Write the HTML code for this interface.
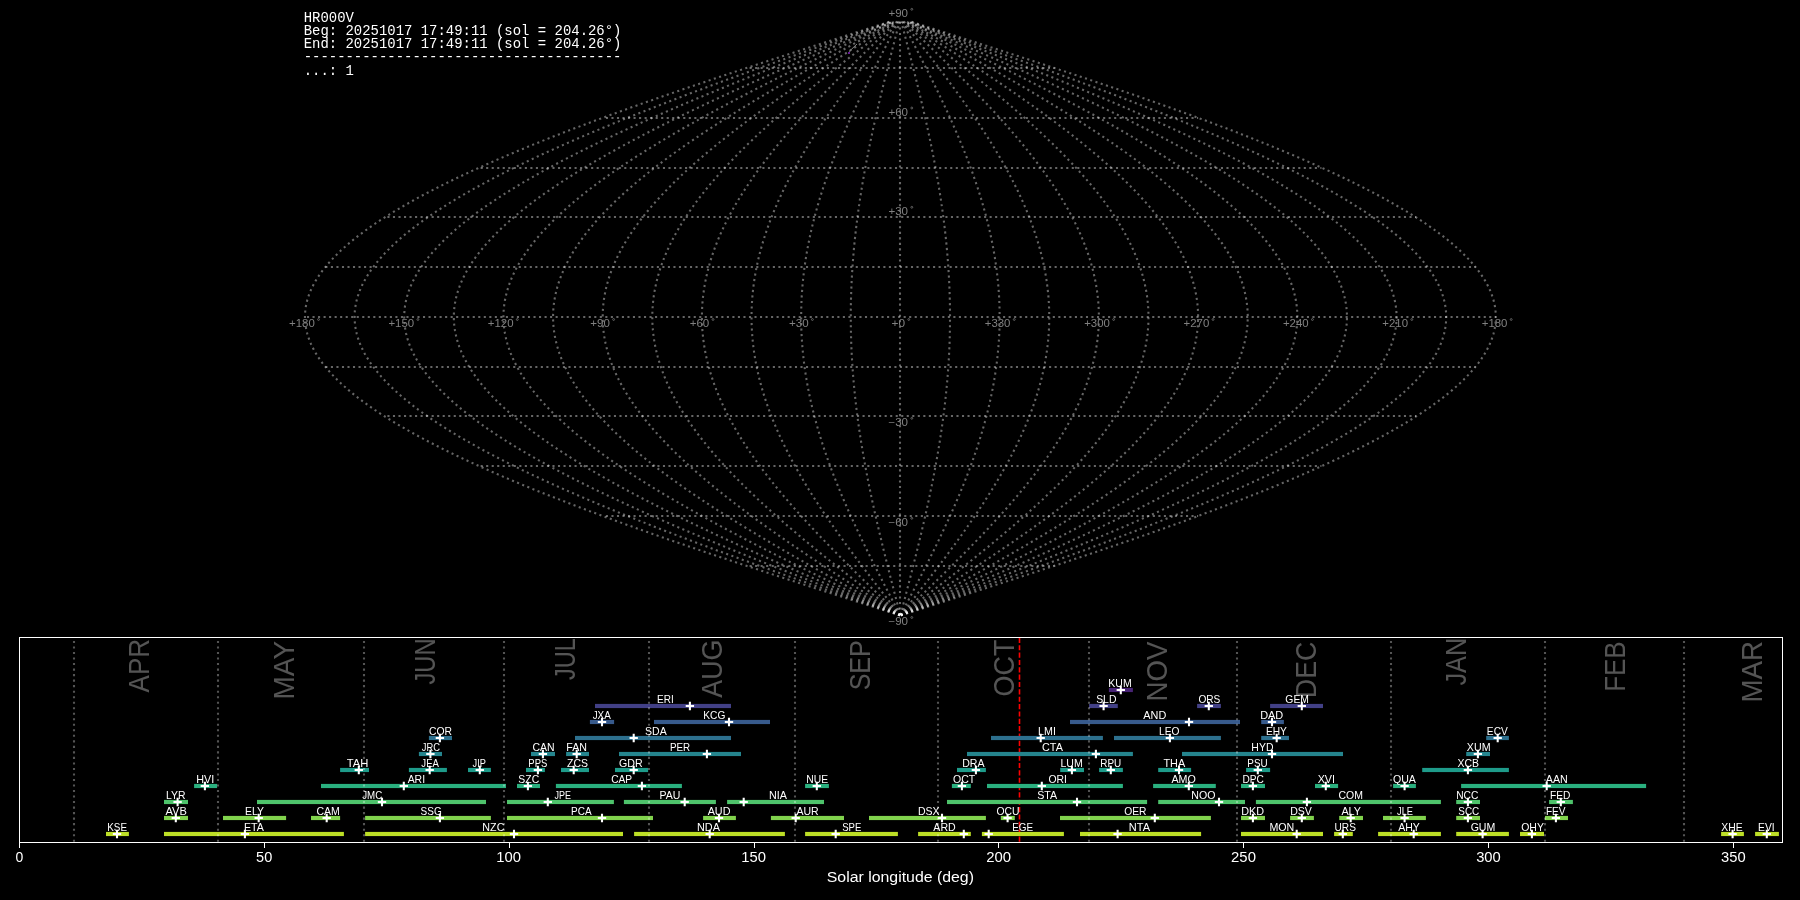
<!DOCTYPE html><html><head><meta charset="utf-8"><title>HR000V</title><style>html,body{margin:0;padding:0;background:#000;width:1800px;height:900px;overflow:hidden}svg{display:block;will-change:transform}text{white-space:pre}</style></head><body>
<svg width="1800" height="900" viewBox="0 0 1800 900">
<rect width="1800" height="900" fill="#000"/>
<g fill="none" stroke="#fff" stroke-opacity="0.4" stroke-width="2.085" stroke-dasharray="2.0850 3.4395">
<g stroke-dashoffset="-0.45">
<path d="M900.4 615.52 L910.79 612.2 L921.18 608.88 L931.56 605.57 L941.94 602.25 L952.3 598.93 L962.64 595.61 L972.97 592.29 L983.27 588.98 L993.55 585.66 L1003.8 582.34 L1014.02 579.02 L1024.2 575.7 L1034.34 572.39 L1044.45 569.07 L1054.51 565.75 L1064.53 562.43 L1074.49 559.11 L1084.4 555.8 L1094.26 552.48 L1104.05 549.16 L1113.79 545.84 L1123.46 542.52 L1133.06 539.21 L1142.59 535.89 L1152.04 532.57 L1161.42 529.25 L1170.72 525.93 L1179.94 522.62 L1189.08 519.3 L1198.12 515.98 L1207.07 512.66 L1215.94 509.34 L1224.7 506.03 L1233.37 502.71 L1241.93 499.39 L1250.39 496.07 L1258.74 492.75 L1266.99 489.44 L1275.12 486.12 L1283.14 482.8 L1291.04 479.48 L1298.83 476.16 L1306.49 472.85 L1314.03 469.53 L1321.44 466.21 L1328.72 462.89 L1335.88 459.57 L1342.9 456.26 L1349.78 452.94 L1356.53 449.62 L1363.14 446.3 L1369.61 442.98 L1375.94 439.67 L1382.12 436.35 L1388.16 433.03 L1394.04 429.71 L1399.78 426.39 L1405.36 423.08 L1410.79 419.76 L1416.07 416.44 L1421.18 413.12 L1426.14 409.8 L1430.94 406.49 L1435.58 403.17 L1440.05 399.85 L1444.36 396.53 L1448.51 393.21 L1452.48 389.9 L1456.29 386.58 L1459.93 383.26 L1463.4 379.94 L1466.7 376.62 L1469.82 373.31 L1472.77 369.99 L1475.55 366.67 L1478.15 363.35 L1480.58 360.03 L1482.83 356.72 L1484.9 353.4 L1486.79 350.08 L1488.51 346.76 L1490.05 343.44 L1491.4 340.13 L1492.58 336.81 L1493.57 333.49 L1494.39 330.17 L1495.02 326.85 L1495.48 323.54 L1495.75 320.22 L1495.84 316.9 L1495.75 313.58 L1495.48 310.26 L1495.02 306.95 L1494.39 303.63 L1493.57 300.31 L1492.58 296.99 L1491.4 293.67 L1490.05 290.36 L1488.51 287.04 L1486.79 283.72 L1484.9 280.4 L1482.83 277.08 L1480.58 273.77 L1478.15 270.45 L1475.55 267.13 L1472.77 263.81 L1469.82 260.49 L1466.7 257.18 L1463.4 253.86 L1459.93 250.54 L1456.29 247.22 L1452.48 243.9 L1448.51 240.59 L1444.36 237.27 L1440.05 233.95 L1435.58 230.63 L1430.94 227.31 L1426.14 224 L1421.18 220.68 L1416.07 217.36 L1410.79 214.04 L1405.36 210.72 L1399.78 207.41 L1394.04 204.09 L1388.16 200.77 L1382.12 197.45 L1375.94 194.13 L1369.61 190.82 L1363.14 187.5 L1356.53 184.18 L1349.78 180.86 L1342.9 177.54 L1335.88 174.23 L1328.72 170.91 L1321.44 167.59 L1314.03 164.27 L1306.49 160.95 L1298.83 157.64 L1291.04 154.32 L1283.14 151 L1275.12 147.68 L1266.99 144.36 L1258.74 141.05 L1250.39 137.73 L1241.93 134.41 L1233.37 131.09 L1224.7 127.77 L1215.94 124.46 L1207.07 121.14 L1198.12 117.82 L1189.08 114.5 L1179.94 111.18 L1170.72 107.87 L1161.42 104.55 L1152.04 101.23 L1142.59 97.91 L1133.06 94.59 L1123.46 91.28 L1113.79 87.96 L1104.05 84.64 L1094.26 81.32 L1084.4 78 L1074.49 74.69 L1064.53 71.37 L1054.51 68.05 L1044.45 64.73 L1034.34 61.41 L1024.2 58.1 L1014.02 54.78 L1003.8 51.46 L993.55 48.14 L983.27 44.82 L972.97 41.51 L962.64 38.19 L952.3 34.87 L941.94 31.55 L931.56 28.23 L921.18 24.92 L910.79 21.6"/>
<path d="M900.4 615.52 L909.93 612.2 L919.45 608.88 L928.97 605.57 L938.47 602.25 L947.97 598.93 L957.45 595.61 L966.92 592.29 L976.36 588.98 L985.79 585.66 L995.18 582.34 L1004.55 579.02 L1013.88 575.7 L1023.18 572.39 L1032.45 569.07 L1041.67 565.75 L1050.85 562.43 L1059.98 559.11 L1069.07 555.8 L1078.1 552.48 L1087.08 549.16 L1096 545.84 L1104.87 542.52 L1113.67 539.21 L1122.4 535.89 L1131.07 532.57 L1139.67 529.25 L1148.2 525.93 L1156.65 522.62 L1165.02 519.3 L1173.31 515.98 L1181.52 512.66 L1189.64 509.34 L1197.67 506.03 L1205.62 502.71 L1213.47 499.39 L1221.22 496.07 L1228.88 492.75 L1236.44 489.44 L1243.9 486.12 L1251.25 482.8 L1258.49 479.48 L1265.62 476.16 L1272.65 472.85 L1279.56 469.53 L1286.35 466.21 L1293.03 462.89 L1299.59 459.57 L1306.02 456.26 L1312.34 452.94 L1318.52 449.62 L1324.58 446.3 L1330.51 442.98 L1336.31 439.67 L1341.98 436.35 L1347.51 433.03 L1352.91 429.71 L1358.16 426.39 L1363.28 423.08 L1368.26 419.76 L1373.09 416.44 L1377.78 413.12 L1382.33 409.8 L1386.73 406.49 L1390.98 403.17 L1395.08 399.85 L1399.03 396.53 L1402.83 393.21 L1406.48 389.9 L1409.97 386.58 L1413.3 383.26 L1416.48 379.94 L1419.51 376.62 L1422.37 373.31 L1425.08 369.99 L1427.62 366.67 L1430.01 363.35 L1432.23 360.03 L1434.29 356.72 L1436.19 353.4 L1437.93 350.08 L1439.5 346.76 L1440.91 343.44 L1442.15 340.13 L1443.23 336.81 L1444.14 333.49 L1444.89 330.17 L1445.47 326.85 L1445.89 323.54 L1446.14 320.22 L1446.22 316.9 L1446.14 313.58 L1445.89 310.26 L1445.47 306.95 L1444.89 303.63 L1444.14 300.31 L1443.23 296.99 L1442.15 293.67 L1440.91 290.36 L1439.5 287.04 L1437.93 283.72 L1436.19 280.4 L1434.29 277.08 L1432.23 273.77 L1430.01 270.45 L1427.62 267.13 L1425.08 263.81 L1422.37 260.49 L1419.51 257.18 L1416.48 253.86 L1413.3 250.54 L1409.97 247.22 L1406.48 243.9 L1402.83 240.59 L1399.03 237.27 L1395.08 233.95 L1390.98 230.63 L1386.73 227.31 L1382.33 224 L1377.78 220.68 L1373.09 217.36 L1368.26 214.04 L1363.28 210.72 L1358.16 207.41 L1352.91 204.09 L1347.51 200.77 L1341.98 197.45 L1336.31 194.13 L1330.51 190.82 L1324.58 187.5 L1318.52 184.18 L1312.34 180.86 L1306.02 177.54 L1299.59 174.23 L1293.03 170.91 L1286.35 167.59 L1279.56 164.27 L1272.65 160.95 L1265.62 157.64 L1258.49 154.32 L1251.25 151 L1243.9 147.68 L1236.44 144.36 L1228.88 141.05 L1221.22 137.73 L1213.47 134.41 L1205.62 131.09 L1197.67 127.77 L1189.64 124.46 L1181.52 121.14 L1173.31 117.82 L1165.02 114.5 L1156.65 111.18 L1148.2 107.87 L1139.67 104.55 L1131.07 101.23 L1122.4 97.91 L1113.67 94.59 L1104.87 91.28 L1096 87.96 L1087.08 84.64 L1078.1 81.32 L1069.07 78 L1059.98 74.69 L1050.85 71.37 L1041.67 68.05 L1032.45 64.73 L1023.18 61.41 L1013.88 58.1 L1004.55 54.78 L995.18 51.46 L985.79 48.14 L976.36 44.82 L966.92 41.51 L957.45 38.19 L947.97 34.87 L938.47 31.55 L928.97 28.23 L919.45 24.92 L909.93 21.6"/>
<path d="M900.4 615.52 L909.06 612.2 L917.72 608.88 L926.37 605.57 L935.01 602.25 L943.65 598.93 L952.27 595.61 L960.87 592.29 L969.46 588.98 L978.02 585.66 L986.56 582.34 L995.08 579.02 L1003.57 575.7 L1012.02 572.39 L1020.44 569.07 L1028.83 565.75 L1037.17 562.43 L1045.47 559.11 L1053.73 555.8 L1061.95 552.48 L1070.11 549.16 L1078.22 545.84 L1086.28 542.52 L1094.28 539.21 L1102.22 535.89 L1110.1 532.57 L1117.92 529.25 L1125.67 525.93 L1133.35 522.62 L1140.96 519.3 L1148.5 515.98 L1155.96 512.66 L1163.35 509.34 L1170.65 506.03 L1177.87 502.71 L1185.01 499.39 L1192.06 496.07 L1199.02 492.75 L1205.89 489.44 L1212.67 486.12 L1219.35 482.8 L1225.94 479.48 L1232.42 476.16 L1238.81 472.85 L1245.09 469.53 L1251.27 466.21 L1257.34 462.89 L1263.3 459.57 L1269.15 456.26 L1274.89 452.94 L1280.51 449.62 L1286.02 446.3 L1291.41 442.98 L1296.68 439.67 L1301.83 436.35 L1306.86 433.03 L1311.77 429.71 L1316.55 426.39 L1321.2 423.08 L1325.73 419.76 L1330.12 416.44 L1334.39 413.12 L1338.52 409.8 L1342.52 406.49 L1346.38 403.17 L1350.11 399.85 L1353.7 396.53 L1357.15 393.21 L1360.47 389.9 L1363.64 386.58 L1366.68 383.26 L1369.57 379.94 L1372.31 376.62 L1374.92 373.31 L1377.38 369.99 L1379.69 366.67 L1381.86 363.35 L1383.88 360.03 L1385.76 356.72 L1387.48 353.4 L1389.06 350.08 L1390.49 346.76 L1391.77 343.44 L1392.9 340.13 L1393.88 336.81 L1394.71 333.49 L1395.39 330.17 L1395.92 326.85 L1396.3 323.54 L1396.52 320.22 L1396.6 316.9 L1396.52 313.58 L1396.3 310.26 L1395.92 306.95 L1395.39 303.63 L1394.71 300.31 L1393.88 296.99 L1392.9 293.67 L1391.77 290.36 L1390.49 287.04 L1389.06 283.72 L1387.48 280.4 L1385.76 277.08 L1383.88 273.77 L1381.86 270.45 L1379.69 267.13 L1377.38 263.81 L1374.92 260.49 L1372.31 257.18 L1369.57 253.86 L1366.68 250.54 L1363.64 247.22 L1360.47 243.9 L1357.15 240.59 L1353.7 237.27 L1350.11 233.95 L1346.38 230.63 L1342.52 227.31 L1338.52 224 L1334.39 220.68 L1330.12 217.36 L1325.73 214.04 L1321.2 210.72 L1316.55 207.41 L1311.77 204.09 L1306.86 200.77 L1301.83 197.45 L1296.68 194.13 L1291.41 190.82 L1286.02 187.5 L1280.51 184.18 L1274.89 180.86 L1269.15 177.54 L1263.3 174.23 L1257.34 170.91 L1251.27 167.59 L1245.09 164.27 L1238.81 160.95 L1232.42 157.64 L1225.94 154.32 L1219.35 151 L1212.67 147.68 L1205.89 144.36 L1199.02 141.05 L1192.06 137.73 L1185.01 134.41 L1177.87 131.09 L1170.65 127.77 L1163.35 124.46 L1155.96 121.14 L1148.5 117.82 L1140.96 114.5 L1133.35 111.18 L1125.67 107.87 L1117.92 104.55 L1110.1 101.23 L1102.22 97.91 L1094.28 94.59 L1086.28 91.28 L1078.22 87.96 L1070.11 84.64 L1061.95 81.32 L1053.73 78 L1045.47 74.69 L1037.17 71.37 L1028.83 68.05 L1020.44 64.73 L1012.02 61.41 L1003.57 58.1 L995.08 54.78 L986.56 51.46 L978.02 48.14 L969.46 44.82 L960.87 41.51 L952.27 38.19 L943.65 34.87 L935.01 31.55 L926.37 28.23 L917.72 24.92 L909.06 21.6"/>
<path d="M900.4 615.52 L908.19 612.2 L915.99 608.88 L923.77 605.57 L931.55 602.25 L939.32 598.93 L947.08 595.61 L954.82 592.29 L962.55 588.98 L970.26 585.66 L977.95 582.34 L985.61 579.02 L993.25 575.7 L1000.86 572.39 L1008.44 569.07 L1015.98 565.75 L1023.49 562.43 L1030.97 559.11 L1038.4 555.8 L1045.79 552.48 L1053.14 549.16 L1060.44 545.84 L1067.69 542.52 L1074.89 539.21 L1082.04 535.89 L1089.13 532.57 L1096.17 529.25 L1103.14 525.93 L1110.06 522.62 L1116.91 519.3 L1123.69 515.98 L1130.41 512.66 L1137.05 509.34 L1143.62 506.03 L1150.12 502.71 L1156.55 499.39 L1162.89 496.07 L1169.16 492.75 L1175.34 489.44 L1181.44 486.12 L1187.46 482.8 L1193.38 479.48 L1199.22 476.16 L1204.97 472.85 L1210.62 469.53 L1216.18 466.21 L1221.64 462.89 L1227.01 459.57 L1232.27 456.26 L1237.44 452.94 L1242.5 449.62 L1247.46 446.3 L1252.31 442.98 L1257.05 439.67 L1261.69 436.35 L1266.22 433.03 L1270.63 429.71 L1274.93 426.39 L1279.12 423.08 L1283.19 419.76 L1287.15 416.44 L1290.99 413.12 L1294.71 409.8 L1298.31 406.49 L1301.78 403.17 L1305.14 399.85 L1308.37 396.53 L1311.48 393.21 L1314.46 389.9 L1317.32 386.58 L1320.05 383.26 L1322.65 379.94 L1325.12 376.62 L1327.47 373.31 L1329.68 369.99 L1331.76 366.67 L1333.71 363.35 L1335.53 360.03 L1337.22 356.72 L1338.78 353.4 L1340.2 350.08 L1341.48 346.76 L1342.63 343.44 L1343.65 340.13 L1344.53 336.81 L1345.28 333.49 L1345.89 330.17 L1346.37 326.85 L1346.71 323.54 L1346.91 320.22 L1346.98 316.9 L1346.91 313.58 L1346.71 310.26 L1346.37 306.95 L1345.89 303.63 L1345.28 300.31 L1344.53 296.99 L1343.65 293.67 L1342.63 290.36 L1341.48 287.04 L1340.2 283.72 L1338.78 280.4 L1337.22 277.08 L1335.53 273.77 L1333.71 270.45 L1331.76 267.13 L1329.68 263.81 L1327.47 260.49 L1325.12 257.18 L1322.65 253.86 L1320.05 250.54 L1317.32 247.22 L1314.46 243.9 L1311.48 240.59 L1308.37 237.27 L1305.14 233.95 L1301.78 230.63 L1298.31 227.31 L1294.71 224 L1290.99 220.68 L1287.15 217.36 L1283.19 214.04 L1279.12 210.72 L1274.93 207.41 L1270.63 204.09 L1266.22 200.77 L1261.69 197.45 L1257.05 194.13 L1252.31 190.82 L1247.46 187.5 L1242.5 184.18 L1237.44 180.86 L1232.27 177.54 L1227.01 174.23 L1221.64 170.91 L1216.18 167.59 L1210.62 164.27 L1204.97 160.95 L1199.22 157.64 L1193.38 154.32 L1187.46 151 L1181.44 147.68 L1175.34 144.36 L1169.16 141.05 L1162.89 137.73 L1156.55 134.41 L1150.12 131.09 L1143.62 127.77 L1137.05 124.46 L1130.41 121.14 L1123.69 117.82 L1116.91 114.5 L1110.06 111.18 L1103.14 107.87 L1096.17 104.55 L1089.13 101.23 L1082.04 97.91 L1074.89 94.59 L1067.69 91.28 L1060.44 87.96 L1053.14 84.64 L1045.79 81.32 L1038.4 78 L1030.97 74.69 L1023.49 71.37 L1015.98 68.05 L1008.44 64.73 L1000.86 61.41 L993.25 58.1 L985.61 54.78 L977.95 51.46 L970.26 48.14 L962.55 44.82 L954.82 41.51 L947.08 38.19 L939.32 34.87 L931.55 31.55 L923.77 28.23 L915.99 24.92 L908.19 21.6"/>
<path d="M900.4 615.52 L907.33 612.2 L914.25 608.88 L921.18 605.57 L928.09 602.25 L935 598.93 L941.89 595.61 L948.78 592.29 L955.65 588.98 L962.5 585.66 L969.33 582.34 L976.14 579.02 L982.93 575.7 L989.7 572.39 L996.43 569.07 L1003.14 565.75 L1009.82 562.43 L1016.46 559.11 L1023.07 555.8 L1029.64 552.48 L1036.17 549.16 L1042.66 545.84 L1049.1 542.52 L1055.5 539.21 L1061.86 535.89 L1068.16 532.57 L1074.42 529.25 L1080.62 525.93 L1086.76 522.62 L1092.85 519.3 L1098.88 515.98 L1104.85 512.66 L1110.76 509.34 L1116.6 506.03 L1122.38 502.71 L1128.09 499.39 L1133.73 496.07 L1139.3 492.75 L1144.79 489.44 L1150.22 486.12 L1155.56 482.8 L1160.83 479.48 L1166.02 476.16 L1171.13 472.85 L1176.15 469.53 L1181.09 466.21 L1185.95 462.89 L1190.72 459.57 L1195.4 456.26 L1199.99 452.94 L1204.49 449.62 L1208.9 446.3 L1213.21 442.98 L1217.43 439.67 L1221.55 436.35 L1225.57 433.03 L1229.49 429.71 L1233.32 426.39 L1237.04 423.08 L1240.66 419.76 L1244.18 416.44 L1247.59 413.12 L1250.89 409.8 L1254.09 406.49 L1257.19 403.17 L1260.17 399.85 L1263.04 396.53 L1265.8 393.21 L1268.45 389.9 L1270.99 386.58 L1273.42 383.26 L1275.73 379.94 L1277.93 376.62 L1280.01 373.31 L1281.98 369.99 L1283.83 366.67 L1285.57 363.35 L1287.19 360.03 L1288.69 356.72 L1290.07 353.4 L1291.33 350.08 L1292.47 346.76 L1293.5 343.44 L1294.4 340.13 L1295.19 336.81 L1295.85 333.49 L1296.39 330.17 L1296.82 326.85 L1297.12 323.54 L1297.3 320.22 L1297.36 316.9 L1297.3 313.58 L1297.12 310.26 L1296.82 306.95 L1296.39 303.63 L1295.85 300.31 L1295.19 296.99 L1294.4 293.67 L1293.5 290.36 L1292.47 287.04 L1291.33 283.72 L1290.07 280.4 L1288.69 277.08 L1287.19 273.77 L1285.57 270.45 L1283.83 267.13 L1281.98 263.81 L1280.01 260.49 L1277.93 257.18 L1275.73 253.86 L1273.42 250.54 L1270.99 247.22 L1268.45 243.9 L1265.8 240.59 L1263.04 237.27 L1260.17 233.95 L1257.19 230.63 L1254.09 227.31 L1250.89 224 L1247.59 220.68 L1244.18 217.36 L1240.66 214.04 L1237.04 210.72 L1233.32 207.41 L1229.49 204.09 L1225.57 200.77 L1221.55 197.45 L1217.43 194.13 L1213.21 190.82 L1208.9 187.5 L1204.49 184.18 L1199.99 180.86 L1195.4 177.54 L1190.72 174.23 L1185.95 170.91 L1181.09 167.59 L1176.15 164.27 L1171.13 160.95 L1166.02 157.64 L1160.83 154.32 L1155.56 151 L1150.22 147.68 L1144.79 144.36 L1139.3 141.05 L1133.73 137.73 L1128.09 134.41 L1122.38 131.09 L1116.6 127.77 L1110.76 124.46 L1104.85 121.14 L1098.88 117.82 L1092.85 114.5 L1086.76 111.18 L1080.62 107.87 L1074.42 104.55 L1068.16 101.23 L1061.86 97.91 L1055.5 94.59 L1049.1 91.28 L1042.66 87.96 L1036.17 84.64 L1029.64 81.32 L1023.07 78 L1016.46 74.69 L1009.82 71.37 L1003.14 68.05 L996.43 64.73 L989.7 61.41 L982.93 58.1 L976.14 54.78 L969.33 51.46 L962.5 48.14 L955.65 44.82 L948.78 41.51 L941.89 38.19 L935 34.87 L928.09 31.55 L921.18 28.23 L914.25 24.92 L907.33 21.6"/>
<path d="M900.4 615.52 L906.46 612.2 L912.52 608.88 L918.58 605.57 L924.63 602.25 L930.67 598.93 L936.71 595.61 L942.73 592.29 L948.74 588.98 L954.74 585.66 L960.71 582.34 L966.68 579.02 L972.62 575.7 L978.53 572.39 L984.43 569.07 L990.3 565.75 L996.14 562.43 L1001.95 559.11 L1007.73 555.8 L1013.48 552.48 L1019.2 549.16 L1024.88 545.84 L1030.52 542.52 L1036.12 539.21 L1041.68 535.89 L1047.19 532.57 L1052.66 529.25 L1058.09 525.93 L1063.47 522.62 L1068.79 519.3 L1074.07 515.98 L1079.29 512.66 L1084.46 509.34 L1089.57 506.03 L1094.63 502.71 L1099.63 499.39 L1104.56 496.07 L1109.43 492.75 L1114.24 489.44 L1118.99 486.12 L1123.67 482.8 L1128.28 479.48 L1132.82 476.16 L1137.29 472.85 L1141.68 469.53 L1146.01 466.21 L1150.26 462.89 L1154.43 459.57 L1158.52 456.26 L1162.54 452.94 L1166.48 449.62 L1170.33 446.3 L1174.11 442.98 L1177.8 439.67 L1181.4 436.35 L1184.92 433.03 L1188.36 429.71 L1191.7 426.39 L1194.96 423.08 L1198.13 419.76 L1201.21 416.44 L1204.19 413.12 L1207.08 409.8 L1209.88 406.49 L1212.59 403.17 L1215.2 399.85 L1217.71 396.53 L1220.13 393.21 L1222.45 389.9 L1224.67 386.58 L1226.79 383.26 L1228.82 379.94 L1230.74 376.62 L1232.56 373.31 L1234.28 369.99 L1235.9 366.67 L1237.42 363.35 L1238.84 360.03 L1240.15 356.72 L1241.36 353.4 L1242.46 350.08 L1243.46 346.76 L1244.36 343.44 L1245.15 340.13 L1245.84 336.81 L1246.42 333.49 L1246.89 330.17 L1247.26 326.85 L1247.53 323.54 L1247.69 320.22 L1247.74 316.9 L1247.69 313.58 L1247.53 310.26 L1247.26 306.95 L1246.89 303.63 L1246.42 300.31 L1245.84 296.99 L1245.15 293.67 L1244.36 290.36 L1243.46 287.04 L1242.46 283.72 L1241.36 280.4 L1240.15 277.08 L1238.84 273.77 L1237.42 270.45 L1235.9 267.13 L1234.28 263.81 L1232.56 260.49 L1230.74 257.18 L1228.82 253.86 L1226.79 250.54 L1224.67 247.22 L1222.45 243.9 L1220.13 240.59 L1217.71 237.27 L1215.2 233.95 L1212.59 230.63 L1209.88 227.31 L1207.08 224 L1204.19 220.68 L1201.21 217.36 L1198.13 214.04 L1194.96 210.72 L1191.7 207.41 L1188.36 204.09 L1184.92 200.77 L1181.4 197.45 L1177.8 194.13 L1174.11 190.82 L1170.33 187.5 L1166.48 184.18 L1162.54 180.86 L1158.52 177.54 L1154.43 174.23 L1150.26 170.91 L1146.01 167.59 L1141.68 164.27 L1137.29 160.95 L1132.82 157.64 L1128.28 154.32 L1123.67 151 L1118.99 147.68 L1114.24 144.36 L1109.43 141.05 L1104.56 137.73 L1099.63 134.41 L1094.63 131.09 L1089.57 127.77 L1084.46 124.46 L1079.29 121.14 L1074.07 117.82 L1068.79 114.5 L1063.47 111.18 L1058.09 107.87 L1052.66 104.55 L1047.19 101.23 L1041.68 97.91 L1036.12 94.59 L1030.52 91.28 L1024.88 87.96 L1019.2 84.64 L1013.48 81.32 L1007.73 78 L1001.95 74.69 L996.14 71.37 L990.3 68.05 L984.43 64.73 L978.53 61.41 L972.62 58.1 L966.68 54.78 L960.71 51.46 L954.74 48.14 L948.74 44.82 L942.73 41.51 L936.71 38.19 L930.67 34.87 L924.63 31.55 L918.58 28.23 L912.52 24.92 L906.46 21.6"/>
<path d="M900.4 615.52 L905.6 612.2 L910.79 608.88 L915.98 605.57 L921.17 602.25 L926.35 598.93 L931.52 595.61 L936.68 592.29 L941.83 588.98 L946.97 585.66 L952.1 582.34 L957.21 579.02 L962.3 575.7 L967.37 572.39 L972.42 569.07 L977.46 565.75 L982.46 562.43 L987.44 559.11 L992.4 555.8 L997.33 552.48 L1002.23 549.16 L1007.09 545.84 L1011.93 542.52 L1016.73 539.21 L1021.49 535.89 L1026.22 532.57 L1030.91 529.25 L1035.56 525.93 L1040.17 522.62 L1044.74 519.3 L1049.26 515.98 L1053.74 512.66 L1058.17 509.34 L1062.55 506.03 L1066.88 502.71 L1071.17 499.39 L1075.4 496.07 L1079.57 492.75 L1083.69 489.44 L1087.76 486.12 L1091.77 482.8 L1095.72 479.48 L1099.61 476.16 L1103.44 472.85 L1107.21 469.53 L1110.92 466.21 L1114.56 462.89 L1118.14 459.57 L1121.65 456.26 L1125.09 452.94 L1128.47 449.62 L1131.77 446.3 L1135.01 442.98 L1138.17 439.67 L1141.26 436.35 L1144.28 433.03 L1147.22 429.71 L1150.09 426.39 L1152.88 423.08 L1155.6 419.76 L1158.23 416.44 L1160.79 413.12 L1163.27 409.8 L1165.67 406.49 L1167.99 403.17 L1170.23 399.85 L1172.38 396.53 L1174.45 393.21 L1176.44 389.9 L1178.35 386.58 L1180.17 383.26 L1181.9 379.94 L1183.55 376.62 L1185.11 373.31 L1186.59 369.99 L1187.98 366.67 L1189.28 363.35 L1190.49 360.03 L1191.61 356.72 L1192.65 353.4 L1193.6 350.08 L1194.45 346.76 L1195.22 343.44 L1195.9 340.13 L1196.49 336.81 L1196.99 333.49 L1197.39 330.17 L1197.71 326.85 L1197.94 323.54 L1198.07 320.22 L1198.12 316.9 L1198.07 313.58 L1197.94 310.26 L1197.71 306.95 L1197.39 303.63 L1196.99 300.31 L1196.49 296.99 L1195.9 293.67 L1195.22 290.36 L1194.45 287.04 L1193.6 283.72 L1192.65 280.4 L1191.61 277.08 L1190.49 273.77 L1189.28 270.45 L1187.98 267.13 L1186.59 263.81 L1185.11 260.49 L1183.55 257.18 L1181.9 253.86 L1180.17 250.54 L1178.35 247.22 L1176.44 243.9 L1174.45 240.59 L1172.38 237.27 L1170.23 233.95 L1167.99 230.63 L1165.67 227.31 L1163.27 224 L1160.79 220.68 L1158.23 217.36 L1155.6 214.04 L1152.88 210.72 L1150.09 207.41 L1147.22 204.09 L1144.28 200.77 L1141.26 197.45 L1138.17 194.13 L1135.01 190.82 L1131.77 187.5 L1128.47 184.18 L1125.09 180.86 L1121.65 177.54 L1118.14 174.23 L1114.56 170.91 L1110.92 167.59 L1107.21 164.27 L1103.44 160.95 L1099.61 157.64 L1095.72 154.32 L1091.77 151 L1087.76 147.68 L1083.69 144.36 L1079.57 141.05 L1075.4 137.73 L1071.17 134.41 L1066.88 131.09 L1062.55 127.77 L1058.17 124.46 L1053.74 121.14 L1049.26 117.82 L1044.74 114.5 L1040.17 111.18 L1035.56 107.87 L1030.91 104.55 L1026.22 101.23 L1021.49 97.91 L1016.73 94.59 L1011.93 91.28 L1007.09 87.96 L1002.23 84.64 L997.33 81.32 L992.4 78 L987.44 74.69 L982.46 71.37 L977.46 68.05 L972.42 64.73 L967.37 61.41 L962.3 58.1 L957.21 54.78 L952.1 51.46 L946.97 48.14 L941.83 44.82 L936.68 41.51 L931.52 38.19 L926.35 34.87 L921.17 31.55 L915.98 28.23 L910.79 24.92 L905.6 21.6"/>
<path d="M900.4 615.52 L904.73 612.2 L909.06 608.88 L913.38 605.57 L917.71 602.25 L922.02 598.93 L926.33 595.61 L930.64 592.29 L934.93 588.98 L939.21 585.66 L943.48 582.34 L947.74 579.02 L951.98 575.7 L956.21 572.39 L960.42 569.07 L964.61 565.75 L968.79 562.43 L972.94 559.11 L977.07 555.8 L981.17 552.48 L985.26 549.16 L989.31 545.84 L993.34 542.52 L997.34 539.21 L1001.31 535.89 L1005.25 532.57 L1009.16 529.25 L1013.04 525.93 L1016.88 522.62 L1020.68 519.3 L1024.45 515.98 L1028.18 512.66 L1031.87 509.34 L1035.52 506.03 L1039.14 502.71 L1042.7 499.39 L1046.23 496.07 L1049.71 492.75 L1053.15 489.44 L1056.53 486.12 L1059.88 482.8 L1063.17 479.48 L1066.41 476.16 L1069.6 472.85 L1072.74 469.53 L1075.83 466.21 L1078.87 462.89 L1081.85 459.57 L1084.77 456.26 L1087.64 452.94 L1090.46 449.62 L1093.21 446.3 L1095.91 442.98 L1098.54 439.67 L1101.12 436.35 L1103.63 433.03 L1106.08 429.71 L1108.47 426.39 L1110.8 423.08 L1113.06 419.76 L1115.26 416.44 L1117.39 413.12 L1119.46 409.8 L1121.46 406.49 L1123.39 403.17 L1125.25 399.85 L1127.05 396.53 L1128.78 393.21 L1130.43 389.9 L1132.02 386.58 L1133.54 383.26 L1134.98 379.94 L1136.36 376.62 L1137.66 373.31 L1138.89 369.99 L1140.05 366.67 L1141.13 363.35 L1142.14 360.03 L1143.08 356.72 L1143.94 353.4 L1144.73 350.08 L1145.45 346.76 L1146.09 343.44 L1146.65 340.13 L1147.14 336.81 L1147.56 333.49 L1147.9 330.17 L1148.16 326.85 L1148.35 323.54 L1148.46 320.22 L1148.5 316.9 L1148.46 313.58 L1148.35 310.26 L1148.16 306.95 L1147.9 303.63 L1147.56 300.31 L1147.14 296.99 L1146.65 293.67 L1146.09 290.36 L1145.45 287.04 L1144.73 283.72 L1143.94 280.4 L1143.08 277.08 L1142.14 273.77 L1141.13 270.45 L1140.05 267.13 L1138.89 263.81 L1137.66 260.49 L1136.36 257.18 L1134.98 253.86 L1133.54 250.54 L1132.02 247.22 L1130.43 243.9 L1128.78 240.59 L1127.05 237.27 L1125.25 233.95 L1123.39 230.63 L1121.46 227.31 L1119.46 224 L1117.39 220.68 L1115.26 217.36 L1113.06 214.04 L1110.8 210.72 L1108.47 207.41 L1106.08 204.09 L1103.63 200.77 L1101.12 197.45 L1098.54 194.13 L1095.91 190.82 L1093.21 187.5 L1090.46 184.18 L1087.64 180.86 L1084.77 177.54 L1081.85 174.23 L1078.87 170.91 L1075.83 167.59 L1072.74 164.27 L1069.6 160.95 L1066.41 157.64 L1063.17 154.32 L1059.88 151 L1056.53 147.68 L1053.15 144.36 L1049.71 141.05 L1046.23 137.73 L1042.7 134.41 L1039.14 131.09 L1035.52 127.77 L1031.87 124.46 L1028.18 121.14 L1024.45 117.82 L1020.68 114.5 L1016.88 111.18 L1013.04 107.87 L1009.16 104.55 L1005.25 101.23 L1001.31 97.91 L997.34 94.59 L993.34 91.28 L989.31 87.96 L985.26 84.64 L981.17 81.32 L977.07 78 L972.94 74.69 L968.79 71.37 L964.61 68.05 L960.42 64.73 L956.21 61.41 L951.98 58.1 L947.74 54.78 L943.48 51.46 L939.21 48.14 L934.93 44.82 L930.64 41.51 L926.33 38.19 L922.02 34.87 L917.71 31.55 L913.38 28.23 L909.06 24.92 L904.73 21.6"/>
<path d="M900.4 615.52 L903.86 612.2 L907.33 608.88 L910.79 605.57 L914.25 602.25 L917.7 598.93 L921.15 595.61 L924.59 592.29 L928.02 588.98 L931.45 585.66 L934.87 582.34 L938.27 579.02 L941.67 575.7 L945.05 572.39 L948.42 569.07 L951.77 565.75 L955.11 562.43 L958.43 559.11 L961.73 555.8 L965.02 552.48 L968.28 549.16 L971.53 545.84 L974.75 542.52 L977.95 539.21 L981.13 535.89 L984.28 532.57 L987.41 529.25 L990.51 525.93 L993.58 522.62 L996.63 519.3 L999.64 515.98 L1002.62 512.66 L1005.58 509.34 L1008.5 506.03 L1011.39 502.71 L1014.24 499.39 L1017.06 496.07 L1019.85 492.75 L1022.6 489.44 L1025.31 486.12 L1027.98 482.8 L1030.61 479.48 L1033.21 476.16 L1035.76 472.85 L1038.28 469.53 L1040.75 466.21 L1043.17 462.89 L1045.56 459.57 L1047.9 456.26 L1050.19 452.94 L1052.44 449.62 L1054.65 446.3 L1056.8 442.98 L1058.91 439.67 L1060.97 436.35 L1062.99 433.03 L1064.95 429.71 L1066.86 426.39 L1068.72 423.08 L1070.53 419.76 L1072.29 416.44 L1073.99 413.12 L1075.65 409.8 L1077.25 406.49 L1078.79 403.17 L1080.28 399.85 L1081.72 396.53 L1083.1 393.21 L1084.43 389.9 L1085.7 386.58 L1086.91 383.26 L1088.07 379.94 L1089.17 376.62 L1090.21 373.31 L1091.19 369.99 L1092.12 366.67 L1092.98 363.35 L1093.79 360.03 L1094.54 356.72 L1095.23 353.4 L1095.86 350.08 L1096.44 346.76 L1096.95 343.44 L1097.4 340.13 L1097.79 336.81 L1098.12 333.49 L1098.4 330.17 L1098.61 326.85 L1098.76 323.54 L1098.85 320.22 L1098.88 316.9 L1098.85 313.58 L1098.76 310.26 L1098.61 306.95 L1098.4 303.63 L1098.12 300.31 L1097.79 296.99 L1097.4 293.67 L1096.95 290.36 L1096.44 287.04 L1095.86 283.72 L1095.23 280.4 L1094.54 277.08 L1093.79 273.77 L1092.98 270.45 L1092.12 267.13 L1091.19 263.81 L1090.21 260.49 L1089.17 257.18 L1088.07 253.86 L1086.91 250.54 L1085.7 247.22 L1084.43 243.9 L1083.1 240.59 L1081.72 237.27 L1080.28 233.95 L1078.79 230.63 L1077.25 227.31 L1075.65 224 L1073.99 220.68 L1072.29 217.36 L1070.53 214.04 L1068.72 210.72 L1066.86 207.41 L1064.95 204.09 L1062.99 200.77 L1060.97 197.45 L1058.91 194.13 L1056.8 190.82 L1054.65 187.5 L1052.44 184.18 L1050.19 180.86 L1047.9 177.54 L1045.56 174.23 L1043.17 170.91 L1040.75 167.59 L1038.28 164.27 L1035.76 160.95 L1033.21 157.64 L1030.61 154.32 L1027.98 151 L1025.31 147.68 L1022.6 144.36 L1019.85 141.05 L1017.06 137.73 L1014.24 134.41 L1011.39 131.09 L1008.5 127.77 L1005.58 124.46 L1002.62 121.14 L999.64 117.82 L996.63 114.5 L993.58 111.18 L990.51 107.87 L987.41 104.55 L984.28 101.23 L981.13 97.91 L977.95 94.59 L974.75 91.28 L971.53 87.96 L968.28 84.64 L965.02 81.32 L961.73 78 L958.43 74.69 L955.11 71.37 L951.77 68.05 L948.42 64.73 L945.05 61.41 L941.67 58.1 L938.27 54.78 L934.87 51.46 L931.45 48.14 L928.02 44.82 L924.59 41.51 L921.15 38.19 L917.7 34.87 L914.25 31.55 L910.79 28.23 L907.33 24.92 L903.86 21.6"/>
<path d="M900.4 615.52 L903 612.2 L905.6 608.88 L908.19 605.57 L910.78 602.25 L913.37 598.93 L915.96 595.61 L918.54 592.29 L921.12 588.98 L923.69 585.66 L926.25 582.34 L928.8 579.02 L931.35 575.7 L933.89 572.39 L936.41 569.07 L938.93 565.75 L941.43 562.43 L943.92 559.11 L946.4 555.8 L948.86 552.48 L951.31 549.16 L953.75 545.84 L956.16 542.52 L958.56 539.21 L960.95 535.89 L963.31 532.57 L965.66 529.25 L967.98 525.93 L970.29 522.62 L972.57 519.3 L974.83 515.98 L977.07 512.66 L979.28 509.34 L981.47 506.03 L983.64 502.71 L985.78 499.39 L987.9 496.07 L989.99 492.75 L992.05 489.44 L994.08 486.12 L996.09 482.8 L998.06 479.48 L1000.01 476.16 L1001.92 472.85 L1003.81 469.53 L1005.66 466.21 L1007.48 462.89 L1009.27 459.57 L1011.02 456.26 L1012.75 452.94 L1014.43 449.62 L1016.09 446.3 L1017.7 442.98 L1019.28 439.67 L1020.83 436.35 L1022.34 433.03 L1023.81 429.71 L1025.24 426.39 L1026.64 423.08 L1028 419.76 L1029.32 416.44 L1030.6 413.12 L1031.84 409.8 L1033.04 406.49 L1034.19 403.17 L1035.31 399.85 L1036.39 396.53 L1037.43 393.21 L1038.42 389.9 L1039.37 386.58 L1040.28 383.26 L1041.15 379.94 L1041.97 376.62 L1042.76 373.31 L1043.49 369.99 L1044.19 366.67 L1044.84 363.35 L1045.44 360.03 L1046.01 356.72 L1046.53 353.4 L1047 350.08 L1047.43 346.76 L1047.81 343.44 L1048.15 340.13 L1048.44 336.81 L1048.69 333.49 L1048.9 330.17 L1049.06 326.85 L1049.17 323.54 L1049.24 320.22 L1049.26 316.9 L1049.24 313.58 L1049.17 310.26 L1049.06 306.95 L1048.9 303.63 L1048.69 300.31 L1048.44 296.99 L1048.15 293.67 L1047.81 290.36 L1047.43 287.04 L1047 283.72 L1046.53 280.4 L1046.01 277.08 L1045.44 273.77 L1044.84 270.45 L1044.19 267.13 L1043.49 263.81 L1042.76 260.49 L1041.97 257.18 L1041.15 253.86 L1040.28 250.54 L1039.37 247.22 L1038.42 243.9 L1037.43 240.59 L1036.39 237.27 L1035.31 233.95 L1034.19 230.63 L1033.04 227.31 L1031.84 224 L1030.6 220.68 L1029.32 217.36 L1028 214.04 L1026.64 210.72 L1025.24 207.41 L1023.81 204.09 L1022.34 200.77 L1020.83 197.45 L1019.28 194.13 L1017.7 190.82 L1016.09 187.5 L1014.43 184.18 L1012.75 180.86 L1011.02 177.54 L1009.27 174.23 L1007.48 170.91 L1005.66 167.59 L1003.81 164.27 L1001.92 160.95 L1000.01 157.64 L998.06 154.32 L996.09 151 L994.08 147.68 L992.05 144.36 L989.99 141.05 L987.9 137.73 L985.78 134.41 L983.64 131.09 L981.47 127.77 L979.28 124.46 L977.07 121.14 L974.83 117.82 L972.57 114.5 L970.29 111.18 L967.98 107.87 L965.66 104.55 L963.31 101.23 L960.95 97.91 L958.56 94.59 L956.16 91.28 L953.75 87.96 L951.31 84.64 L948.86 81.32 L946.4 78 L943.92 74.69 L941.43 71.37 L938.93 68.05 L936.41 64.73 L933.89 61.41 L931.35 58.1 L928.8 54.78 L926.25 51.46 L923.69 48.14 L921.12 44.82 L918.54 41.51 L915.96 38.19 L913.37 34.87 L910.78 31.55 L908.19 28.23 L905.6 24.92 L903 21.6"/>
<path d="M900.4 615.52 L902.13 612.2 L903.86 608.88 L905.59 605.57 L907.32 602.25 L909.05 598.93 L910.77 595.61 L912.49 592.29 L914.21 588.98 L915.92 585.66 L917.63 582.34 L919.34 579.02 L921.03 575.7 L922.72 572.39 L924.41 569.07 L926.09 565.75 L927.75 562.43 L929.41 559.11 L931.07 555.8 L932.71 552.48 L934.34 549.16 L935.96 545.84 L937.58 542.52 L939.18 539.21 L940.76 535.89 L942.34 532.57 L943.9 529.25 L945.45 525.93 L946.99 522.62 L948.51 519.3 L950.02 515.98 L951.51 512.66 L952.99 509.34 L954.45 506.03 L955.89 502.71 L957.32 499.39 L958.73 496.07 L960.12 492.75 L961.5 489.44 L962.85 486.12 L964.19 482.8 L965.51 479.48 L966.8 476.16 L968.08 472.85 L969.34 469.53 L970.57 466.21 L971.79 462.89 L972.98 459.57 L974.15 456.26 L975.3 452.94 L976.42 449.62 L977.52 446.3 L978.6 442.98 L979.66 439.67 L980.69 436.35 L981.69 433.03 L982.67 429.71 L983.63 426.39 L984.56 423.08 L985.47 419.76 L986.34 416.44 L987.2 413.12 L988.02 409.8 L988.82 406.49 L989.6 403.17 L990.34 399.85 L991.06 396.53 L991.75 393.21 L992.41 389.9 L993.05 386.58 L993.66 383.26 L994.23 379.94 L994.78 376.62 L995.3 373.31 L995.8 369.99 L996.26 366.67 L996.69 363.35 L997.1 360.03 L997.47 356.72 L997.82 353.4 L998.13 350.08 L998.42 346.76 L998.67 343.44 L998.9 340.13 L999.1 336.81 L999.26 333.49 L999.4 330.17 L999.5 326.85 L999.58 323.54 L999.62 320.22 L999.64 316.9 L999.62 313.58 L999.58 310.26 L999.5 306.95 L999.4 303.63 L999.26 300.31 L999.1 296.99 L998.9 293.67 L998.67 290.36 L998.42 287.04 L998.13 283.72 L997.82 280.4 L997.47 277.08 L997.1 273.77 L996.69 270.45 L996.26 267.13 L995.8 263.81 L995.3 260.49 L994.78 257.18 L994.23 253.86 L993.66 250.54 L993.05 247.22 L992.41 243.9 L991.75 240.59 L991.06 237.27 L990.34 233.95 L989.6 230.63 L988.82 227.31 L988.02 224 L987.2 220.68 L986.34 217.36 L985.47 214.04 L984.56 210.72 L983.63 207.41 L982.67 204.09 L981.69 200.77 L980.69 197.45 L979.66 194.13 L978.6 190.82 L977.52 187.5 L976.42 184.18 L975.3 180.86 L974.15 177.54 L972.98 174.23 L971.79 170.91 L970.57 167.59 L969.34 164.27 L968.08 160.95 L966.8 157.64 L965.51 154.32 L964.19 151 L962.85 147.68 L961.5 144.36 L960.12 141.05 L958.73 137.73 L957.32 134.41 L955.89 131.09 L954.45 127.77 L952.99 124.46 L951.51 121.14 L950.02 117.82 L948.51 114.5 L946.99 111.18 L945.45 107.87 L943.9 104.55 L942.34 101.23 L940.76 97.91 L939.18 94.59 L937.58 91.28 L935.96 87.96 L934.34 84.64 L932.71 81.32 L931.07 78 L929.41 74.69 L927.75 71.37 L926.09 68.05 L924.41 64.73 L922.72 61.41 L921.03 58.1 L919.34 54.78 L917.63 51.46 L915.92 48.14 L914.21 44.82 L912.49 41.51 L910.77 38.19 L909.05 34.87 L907.32 31.55 L905.59 28.23 L903.86 24.92 L902.13 21.6"/>
<path d="M900.4 615.52 L901.27 612.2 L902.13 608.88 L903 605.57 L903.86 602.25 L904.72 598.93 L905.59 595.61 L906.45 592.29 L907.31 588.98 L908.16 585.66 L909.02 582.34 L909.87 579.02 L910.72 575.7 L911.56 572.39 L912.4 569.07 L913.24 565.75 L914.08 562.43 L914.91 559.11 L915.73 555.8 L916.55 552.48 L917.37 549.16 L918.18 545.84 L918.99 542.52 L919.79 539.21 L920.58 535.89 L921.37 532.57 L922.15 529.25 L922.93 525.93 L923.7 522.62 L924.46 519.3 L925.21 515.98 L925.96 512.66 L926.69 509.34 L927.42 506.03 L928.15 502.71 L928.86 499.39 L929.57 496.07 L930.26 492.75 L930.95 489.44 L931.63 486.12 L932.3 482.8 L932.95 479.48 L933.6 476.16 L934.24 472.85 L934.87 469.53 L935.49 466.21 L936.09 462.89 L936.69 459.57 L937.27 456.26 L937.85 452.94 L938.41 449.62 L938.96 446.3 L939.5 442.98 L940.03 439.67 L940.54 436.35 L941.05 433.03 L941.54 429.71 L942.01 426.39 L942.48 423.08 L942.93 419.76 L943.37 416.44 L943.8 413.12 L944.21 409.8 L944.61 406.49 L945 403.17 L945.37 399.85 L945.73 396.53 L946.08 393.21 L946.41 389.9 L946.72 386.58 L947.03 383.26 L947.32 379.94 L947.59 376.62 L947.85 373.31 L948.1 369.99 L948.33 366.67 L948.55 363.35 L948.75 360.03 L948.94 356.72 L949.11 353.4 L949.27 350.08 L949.41 346.76 L949.54 343.44 L949.65 340.13 L949.75 336.81 L949.83 333.49 L949.9 330.17 L949.95 326.85 L949.99 323.54 L950.01 320.22 L950.02 316.9 L950.01 313.58 L949.99 310.26 L949.95 306.95 L949.9 303.63 L949.83 300.31 L949.75 296.99 L949.65 293.67 L949.54 290.36 L949.41 287.04 L949.27 283.72 L949.11 280.4 L948.94 277.08 L948.75 273.77 L948.55 270.45 L948.33 267.13 L948.1 263.81 L947.85 260.49 L947.59 257.18 L947.32 253.86 L947.03 250.54 L946.72 247.22 L946.41 243.9 L946.08 240.59 L945.73 237.27 L945.37 233.95 L945 230.63 L944.61 227.31 L944.21 224 L943.8 220.68 L943.37 217.36 L942.93 214.04 L942.48 210.72 L942.01 207.41 L941.54 204.09 L941.05 200.77 L940.54 197.45 L940.03 194.13 L939.5 190.82 L938.96 187.5 L938.41 184.18 L937.85 180.86 L937.27 177.54 L936.69 174.23 L936.09 170.91 L935.49 167.59 L934.87 164.27 L934.24 160.95 L933.6 157.64 L932.95 154.32 L932.3 151 L931.63 147.68 L930.95 144.36 L930.26 141.05 L929.57 137.73 L928.86 134.41 L928.15 131.09 L927.42 127.77 L926.69 124.46 L925.96 121.14 L925.21 117.82 L924.46 114.5 L923.7 111.18 L922.93 107.87 L922.15 104.55 L921.37 101.23 L920.58 97.91 L919.79 94.59 L918.99 91.28 L918.18 87.96 L917.37 84.64 L916.55 81.32 L915.73 78 L914.91 74.69 L914.08 71.37 L913.24 68.05 L912.4 64.73 L911.56 61.41 L910.72 58.1 L909.87 54.78 L909.02 51.46 L908.16 48.14 L907.31 44.82 L906.45 41.51 L905.59 38.19 L904.72 34.87 L903.86 31.55 L903 28.23 L902.13 24.92 L901.27 21.6"/>
<path d="M900 615.52 V21.6"/>
<path d="M900.4 615.52 L899.53 612.2 L898.67 608.88 L897.8 605.57 L896.94 602.25 L896.08 598.93 L895.21 595.61 L894.35 592.29 L893.49 588.98 L892.64 585.66 L891.78 582.34 L890.93 579.02 L890.08 575.7 L889.24 572.39 L888.4 569.07 L887.56 565.75 L886.72 562.43 L885.89 559.11 L885.07 555.8 L884.25 552.48 L883.43 549.16 L882.62 545.84 L881.81 542.52 L881.01 539.21 L880.22 535.89 L879.43 532.57 L878.65 529.25 L877.87 525.93 L877.1 522.62 L876.34 519.3 L875.59 515.98 L874.84 512.66 L874.11 509.34 L873.38 506.03 L872.65 502.71 L871.94 499.39 L871.23 496.07 L870.54 492.75 L869.85 489.44 L869.17 486.12 L868.5 482.8 L867.85 479.48 L867.2 476.16 L866.56 472.85 L865.93 469.53 L865.31 466.21 L864.71 462.89 L864.11 459.57 L863.53 456.26 L862.95 452.94 L862.39 449.62 L861.84 446.3 L861.3 442.98 L860.77 439.67 L860.26 436.35 L859.75 433.03 L859.26 429.71 L858.79 426.39 L858.32 423.08 L857.87 419.76 L857.43 416.44 L857 413.12 L856.59 409.8 L856.19 406.49 L855.8 403.17 L855.43 399.85 L855.07 396.53 L854.72 393.21 L854.39 389.9 L854.08 386.58 L853.77 383.26 L853.48 379.94 L853.21 376.62 L852.95 373.31 L852.7 369.99 L852.47 366.67 L852.25 363.35 L852.05 360.03 L851.86 356.72 L851.69 353.4 L851.53 350.08 L851.39 346.76 L851.26 343.44 L851.15 340.13 L851.05 336.81 L850.97 333.49 L850.9 330.17 L850.85 326.85 L850.81 323.54 L850.79 320.22 L850.78 316.9 L850.79 313.58 L850.81 310.26 L850.85 306.95 L850.9 303.63 L850.97 300.31 L851.05 296.99 L851.15 293.67 L851.26 290.36 L851.39 287.04 L851.53 283.72 L851.69 280.4 L851.86 277.08 L852.05 273.77 L852.25 270.45 L852.47 267.13 L852.7 263.81 L852.95 260.49 L853.21 257.18 L853.48 253.86 L853.77 250.54 L854.08 247.22 L854.39 243.9 L854.72 240.59 L855.07 237.27 L855.43 233.95 L855.8 230.63 L856.19 227.31 L856.59 224 L857 220.68 L857.43 217.36 L857.87 214.04 L858.32 210.72 L858.79 207.41 L859.26 204.09 L859.75 200.77 L860.26 197.45 L860.77 194.13 L861.3 190.82 L861.84 187.5 L862.39 184.18 L862.95 180.86 L863.53 177.54 L864.11 174.23 L864.71 170.91 L865.31 167.59 L865.93 164.27 L866.56 160.95 L867.2 157.64 L867.85 154.32 L868.5 151 L869.17 147.68 L869.85 144.36 L870.54 141.05 L871.23 137.73 L871.94 134.41 L872.65 131.09 L873.38 127.77 L874.11 124.46 L874.84 121.14 L875.59 117.82 L876.34 114.5 L877.1 111.18 L877.87 107.87 L878.65 104.55 L879.43 101.23 L880.22 97.91 L881.01 94.59 L881.81 91.28 L882.62 87.96 L883.43 84.64 L884.25 81.32 L885.07 78 L885.89 74.69 L886.72 71.37 L887.56 68.05 L888.4 64.73 L889.24 61.41 L890.08 58.1 L890.93 54.78 L891.78 51.46 L892.64 48.14 L893.49 44.82 L894.35 41.51 L895.21 38.19 L896.08 34.87 L896.94 31.55 L897.8 28.23 L898.67 24.92 L899.53 21.6"/>
<path d="M900.4 615.52 L898.67 612.2 L896.94 608.88 L895.21 605.57 L893.48 602.25 L891.75 598.93 L890.03 595.61 L888.31 592.29 L886.59 588.98 L884.88 585.66 L883.17 582.34 L881.46 579.02 L879.77 575.7 L878.08 572.39 L876.39 569.07 L874.71 565.75 L873.05 562.43 L871.39 559.11 L869.73 555.8 L868.09 552.48 L866.46 549.16 L864.84 545.84 L863.22 542.52 L861.62 539.21 L860.04 535.89 L858.46 532.57 L856.9 529.25 L855.35 525.93 L853.81 522.62 L852.29 519.3 L850.78 515.98 L849.29 512.66 L847.81 509.34 L846.35 506.03 L844.91 502.71 L843.48 499.39 L842.07 496.07 L840.68 492.75 L839.3 489.44 L837.95 486.12 L836.61 482.8 L835.29 479.48 L834 476.16 L832.72 472.85 L831.46 469.53 L830.23 466.21 L829.01 462.89 L827.82 459.57 L826.65 456.26 L825.5 452.94 L824.38 449.62 L823.28 446.3 L822.2 442.98 L821.14 439.67 L820.11 436.35 L819.11 433.03 L818.13 429.71 L817.17 426.39 L816.24 423.08 L815.33 419.76 L814.46 416.44 L813.6 413.12 L812.78 409.8 L811.98 406.49 L811.2 403.17 L810.46 399.85 L809.74 396.53 L809.05 393.21 L808.39 389.9 L807.75 386.58 L807.14 383.26 L806.57 379.94 L806.02 376.62 L805.5 373.31 L805 369.99 L804.54 366.67 L804.11 363.35 L803.7 360.03 L803.33 356.72 L802.98 353.4 L802.67 350.08 L802.38 346.76 L802.13 343.44 L801.9 340.13 L801.7 336.81 L801.54 333.49 L801.4 330.17 L801.3 326.85 L801.22 323.54 L801.18 320.22 L801.16 316.9 L801.18 313.58 L801.22 310.26 L801.3 306.95 L801.4 303.63 L801.54 300.31 L801.7 296.99 L801.9 293.67 L802.13 290.36 L802.38 287.04 L802.67 283.72 L802.98 280.4 L803.33 277.08 L803.7 273.77 L804.11 270.45 L804.54 267.13 L805 263.81 L805.5 260.49 L806.02 257.18 L806.57 253.86 L807.14 250.54 L807.75 247.22 L808.39 243.9 L809.05 240.59 L809.74 237.27 L810.46 233.95 L811.2 230.63 L811.98 227.31 L812.78 224 L813.6 220.68 L814.46 217.36 L815.33 214.04 L816.24 210.72 L817.17 207.41 L818.13 204.09 L819.11 200.77 L820.11 197.45 L821.14 194.13 L822.2 190.82 L823.28 187.5 L824.38 184.18 L825.5 180.86 L826.65 177.54 L827.82 174.23 L829.01 170.91 L830.23 167.59 L831.46 164.27 L832.72 160.95 L834 157.64 L835.29 154.32 L836.61 151 L837.95 147.68 L839.3 144.36 L840.68 141.05 L842.07 137.73 L843.48 134.41 L844.91 131.09 L846.35 127.77 L847.81 124.46 L849.29 121.14 L850.78 117.82 L852.29 114.5 L853.81 111.18 L855.35 107.87 L856.9 104.55 L858.46 101.23 L860.04 97.91 L861.62 94.59 L863.22 91.28 L864.84 87.96 L866.46 84.64 L868.09 81.32 L869.73 78 L871.39 74.69 L873.05 71.37 L874.71 68.05 L876.39 64.73 L878.08 61.41 L879.77 58.1 L881.46 54.78 L883.17 51.46 L884.88 48.14 L886.59 44.82 L888.31 41.51 L890.03 38.19 L891.75 34.87 L893.48 31.55 L895.21 28.23 L896.94 24.92 L898.67 21.6"/>
<path d="M900.4 615.52 L897.8 612.2 L895.2 608.88 L892.61 605.57 L890.02 602.25 L887.43 598.93 L884.84 595.61 L882.26 592.29 L879.68 588.98 L877.11 585.66 L874.55 582.34 L872 579.02 L869.45 575.7 L866.91 572.39 L864.39 569.07 L861.87 565.75 L859.37 562.43 L856.88 559.11 L854.4 555.8 L851.94 552.48 L849.49 549.16 L847.05 545.84 L844.64 542.52 L842.24 539.21 L839.85 535.89 L837.49 532.57 L835.14 529.25 L832.82 525.93 L830.51 522.62 L828.23 519.3 L825.97 515.98 L823.73 512.66 L821.52 509.34 L819.33 506.03 L817.16 502.71 L815.02 499.39 L812.9 496.07 L810.81 492.75 L808.75 489.44 L806.72 486.12 L804.71 482.8 L802.74 479.48 L800.79 476.16 L798.88 472.85 L796.99 469.53 L795.14 466.21 L793.32 462.89 L791.53 459.57 L789.78 456.26 L788.05 452.94 L786.37 449.62 L784.71 446.3 L783.1 442.98 L781.52 439.67 L779.97 436.35 L778.46 433.03 L776.99 429.71 L775.56 426.39 L774.16 423.08 L772.8 419.76 L771.48 416.44 L770.2 413.12 L768.96 409.8 L767.76 406.49 L766.61 403.17 L765.49 399.85 L764.41 396.53 L763.37 393.21 L762.38 389.9 L761.43 386.58 L760.52 383.26 L759.65 379.94 L758.83 376.62 L758.04 373.31 L757.31 369.99 L756.61 366.67 L755.96 363.35 L755.36 360.03 L754.79 356.72 L754.27 353.4 L753.8 350.08 L753.37 346.76 L752.99 343.44 L752.65 340.13 L752.36 336.81 L752.11 333.49 L751.9 330.17 L751.74 326.85 L751.63 323.54 L751.56 320.22 L751.54 316.9 L751.56 313.58 L751.63 310.26 L751.74 306.95 L751.9 303.63 L752.11 300.31 L752.36 296.99 L752.65 293.67 L752.99 290.36 L753.37 287.04 L753.8 283.72 L754.27 280.4 L754.79 277.08 L755.36 273.77 L755.96 270.45 L756.61 267.13 L757.31 263.81 L758.04 260.49 L758.83 257.18 L759.65 253.86 L760.52 250.54 L761.43 247.22 L762.38 243.9 L763.37 240.59 L764.41 237.27 L765.49 233.95 L766.61 230.63 L767.76 227.31 L768.96 224 L770.2 220.68 L771.48 217.36 L772.8 214.04 L774.16 210.72 L775.56 207.41 L776.99 204.09 L778.46 200.77 L779.97 197.45 L781.52 194.13 L783.1 190.82 L784.71 187.5 L786.37 184.18 L788.05 180.86 L789.78 177.54 L791.53 174.23 L793.32 170.91 L795.14 167.59 L796.99 164.27 L798.88 160.95 L800.79 157.64 L802.74 154.32 L804.71 151 L806.72 147.68 L808.75 144.36 L810.81 141.05 L812.9 137.73 L815.02 134.41 L817.16 131.09 L819.33 127.77 L821.52 124.46 L823.73 121.14 L825.97 117.82 L828.23 114.5 L830.51 111.18 L832.82 107.87 L835.14 104.55 L837.49 101.23 L839.85 97.91 L842.24 94.59 L844.64 91.28 L847.05 87.96 L849.49 84.64 L851.94 81.32 L854.4 78 L856.88 74.69 L859.37 71.37 L861.87 68.05 L864.39 64.73 L866.91 61.41 L869.45 58.1 L872 54.78 L874.55 51.46 L877.11 48.14 L879.68 44.82 L882.26 41.51 L884.84 38.19 L887.43 34.87 L890.02 31.55 L892.61 28.23 L895.2 24.92 L897.8 21.6"/>
<path d="M900.4 615.52 L896.94 612.2 L893.47 608.88 L890.01 605.57 L886.55 602.25 L883.1 598.93 L879.65 595.61 L876.21 592.29 L872.78 588.98 L869.35 585.66 L865.93 582.34 L862.53 579.02 L859.13 575.7 L855.75 572.39 L852.38 569.07 L849.03 565.75 L845.69 562.43 L842.37 559.11 L839.07 555.8 L835.78 552.48 L832.52 549.16 L829.27 545.84 L826.05 542.52 L822.85 539.21 L819.67 535.89 L816.52 532.57 L813.39 529.25 L810.29 525.93 L807.22 522.62 L804.17 519.3 L801.16 515.98 L798.18 512.66 L795.22 509.34 L792.3 506.03 L789.41 502.71 L786.56 499.39 L783.74 496.07 L780.95 492.75 L778.2 489.44 L775.49 486.12 L772.82 482.8 L770.19 479.48 L767.59 476.16 L765.04 472.85 L762.52 469.53 L760.05 466.21 L757.63 462.89 L755.24 459.57 L752.9 456.26 L750.61 452.94 L748.36 449.62 L746.15 446.3 L744 442.98 L741.89 439.67 L739.83 436.35 L737.81 433.03 L735.85 429.71 L733.94 426.39 L732.08 423.08 L730.27 419.76 L728.51 416.44 L726.81 413.12 L725.15 409.8 L723.55 406.49 L722.01 403.17 L720.52 399.85 L719.08 396.53 L717.7 393.21 L716.37 389.9 L715.1 386.58 L713.89 383.26 L712.73 379.94 L711.63 376.62 L710.59 373.31 L709.61 369.99 L708.68 366.67 L707.82 363.35 L707.01 360.03 L706.26 356.72 L705.57 353.4 L704.94 350.08 L704.36 346.76 L703.85 343.44 L703.4 340.13 L703.01 336.81 L702.68 333.49 L702.4 330.17 L702.19 326.85 L702.04 323.54 L701.95 320.22 L701.92 316.9 L701.95 313.58 L702.04 310.26 L702.19 306.95 L702.4 303.63 L702.68 300.31 L703.01 296.99 L703.4 293.67 L703.85 290.36 L704.36 287.04 L704.94 283.72 L705.57 280.4 L706.26 277.08 L707.01 273.77 L707.82 270.45 L708.68 267.13 L709.61 263.81 L710.59 260.49 L711.63 257.18 L712.73 253.86 L713.89 250.54 L715.1 247.22 L716.37 243.9 L717.7 240.59 L719.08 237.27 L720.52 233.95 L722.01 230.63 L723.55 227.31 L725.15 224 L726.81 220.68 L728.51 217.36 L730.27 214.04 L732.08 210.72 L733.94 207.41 L735.85 204.09 L737.81 200.77 L739.83 197.45 L741.89 194.13 L744 190.82 L746.15 187.5 L748.36 184.18 L750.61 180.86 L752.9 177.54 L755.24 174.23 L757.63 170.91 L760.05 167.59 L762.52 164.27 L765.04 160.95 L767.59 157.64 L770.19 154.32 L772.82 151 L775.49 147.68 L778.2 144.36 L780.95 141.05 L783.74 137.73 L786.56 134.41 L789.41 131.09 L792.3 127.77 L795.22 124.46 L798.18 121.14 L801.16 117.82 L804.17 114.5 L807.22 111.18 L810.29 107.87 L813.39 104.55 L816.52 101.23 L819.67 97.91 L822.85 94.59 L826.05 91.28 L829.27 87.96 L832.52 84.64 L835.78 81.32 L839.07 78 L842.37 74.69 L845.69 71.37 L849.03 68.05 L852.38 64.73 L855.75 61.41 L859.13 58.1 L862.53 54.78 L865.93 51.46 L869.35 48.14 L872.78 44.82 L876.21 41.51 L879.65 38.19 L883.1 34.87 L886.55 31.55 L890.01 28.23 L893.47 24.92 L896.94 21.6"/>
<path d="M900.4 615.52 L896.07 612.2 L891.74 608.88 L887.42 605.57 L883.09 602.25 L878.78 598.93 L874.47 595.61 L870.16 592.29 L865.87 588.98 L861.59 585.66 L857.32 582.34 L853.06 579.02 L848.82 575.7 L844.59 572.39 L840.38 569.07 L836.19 565.75 L832.01 562.43 L827.86 559.11 L823.73 555.8 L819.63 552.48 L815.54 549.16 L811.49 545.84 L807.46 542.52 L803.46 539.21 L799.49 535.89 L795.55 532.57 L791.64 529.25 L787.76 525.93 L783.92 522.62 L780.12 519.3 L776.35 515.98 L772.62 512.66 L768.93 509.34 L765.28 506.03 L761.66 502.71 L758.1 499.39 L754.57 496.07 L751.09 492.75 L747.65 489.44 L744.27 486.12 L740.92 482.8 L737.63 479.48 L734.39 476.16 L731.2 472.85 L728.06 469.53 L724.97 466.21 L721.93 462.89 L718.95 459.57 L716.03 456.26 L713.16 452.94 L710.34 449.62 L707.59 446.3 L704.89 442.98 L702.26 439.67 L699.68 436.35 L697.17 433.03 L694.72 429.71 L692.33 426.39 L690 423.08 L687.74 419.76 L685.54 416.44 L683.41 413.12 L681.34 409.8 L679.34 406.49 L677.41 403.17 L675.55 399.85 L673.75 396.53 L672.02 393.21 L670.37 389.9 L668.78 386.58 L667.26 383.26 L665.82 379.94 L664.44 376.62 L663.14 373.31 L661.91 369.99 L660.75 366.67 L659.67 363.35 L658.66 360.03 L657.72 356.72 L656.86 353.4 L656.07 350.08 L655.35 346.76 L654.71 343.44 L654.15 340.13 L653.66 336.81 L653.24 333.49 L652.9 330.17 L652.64 326.85 L652.45 323.54 L652.34 320.22 L652.3 316.9 L652.34 313.58 L652.45 310.26 L652.64 306.95 L652.9 303.63 L653.24 300.31 L653.66 296.99 L654.15 293.67 L654.71 290.36 L655.35 287.04 L656.07 283.72 L656.86 280.4 L657.72 277.08 L658.66 273.77 L659.67 270.45 L660.75 267.13 L661.91 263.81 L663.14 260.49 L664.44 257.18 L665.82 253.86 L667.26 250.54 L668.78 247.22 L670.37 243.9 L672.02 240.59 L673.75 237.27 L675.55 233.95 L677.41 230.63 L679.34 227.31 L681.34 224 L683.41 220.68 L685.54 217.36 L687.74 214.04 L690 210.72 L692.33 207.41 L694.72 204.09 L697.17 200.77 L699.68 197.45 L702.26 194.13 L704.89 190.82 L707.59 187.5 L710.34 184.18 L713.16 180.86 L716.03 177.54 L718.95 174.23 L721.93 170.91 L724.97 167.59 L728.06 164.27 L731.2 160.95 L734.39 157.64 L737.63 154.32 L740.92 151 L744.27 147.68 L747.65 144.36 L751.09 141.05 L754.57 137.73 L758.1 134.41 L761.66 131.09 L765.28 127.77 L768.93 124.46 L772.62 121.14 L776.35 117.82 L780.12 114.5 L783.92 111.18 L787.76 107.87 L791.64 104.55 L795.55 101.23 L799.49 97.91 L803.46 94.59 L807.46 91.28 L811.49 87.96 L815.54 84.64 L819.63 81.32 L823.73 78 L827.86 74.69 L832.01 71.37 L836.19 68.05 L840.38 64.73 L844.59 61.41 L848.82 58.1 L853.06 54.78 L857.32 51.46 L861.59 48.14 L865.87 44.82 L870.16 41.51 L874.47 38.19 L878.78 34.87 L883.09 31.55 L887.42 28.23 L891.74 24.92 L896.07 21.6"/>
<path d="M900.4 615.52 L895.2 612.2 L890.01 608.88 L884.82 605.57 L879.63 602.25 L874.45 598.93 L869.28 595.61 L864.12 592.29 L858.97 588.98 L853.83 585.66 L848.7 582.34 L843.59 579.02 L838.5 575.7 L833.43 572.39 L828.38 569.07 L823.34 565.75 L818.34 562.43 L813.36 559.11 L808.4 555.8 L803.47 552.48 L798.57 549.16 L793.71 545.84 L788.87 542.52 L784.07 539.21 L779.31 535.89 L774.58 532.57 L769.89 529.25 L765.24 525.93 L760.63 522.62 L756.06 519.3 L751.54 515.98 L747.06 512.66 L742.63 509.34 L738.25 506.03 L733.92 502.71 L729.63 499.39 L725.4 496.07 L721.23 492.75 L717.11 489.44 L713.04 486.12 L709.03 482.8 L705.08 479.48 L701.19 476.16 L697.36 472.85 L693.59 469.53 L689.88 466.21 L686.24 462.89 L682.66 459.57 L679.15 456.26 L675.71 452.94 L672.33 449.62 L669.03 446.3 L665.79 442.98 L662.63 439.67 L659.54 436.35 L656.52 433.03 L653.58 429.71 L650.71 426.39 L647.92 423.08 L645.2 419.76 L642.57 416.44 L640.01 413.12 L637.53 409.8 L635.13 406.49 L632.81 403.17 L630.57 399.85 L628.42 396.53 L626.35 393.21 L624.36 389.9 L622.45 386.58 L620.63 383.26 L618.9 379.94 L617.25 376.62 L615.69 373.31 L614.21 369.99 L612.82 366.67 L611.52 363.35 L610.31 360.03 L609.19 356.72 L608.15 353.4 L607.2 350.08 L606.35 346.76 L605.58 343.44 L604.9 340.13 L604.31 336.81 L603.81 333.49 L603.41 330.17 L603.09 326.85 L602.86 323.54 L602.73 320.22 L602.68 316.9 L602.73 313.58 L602.86 310.26 L603.09 306.95 L603.41 303.63 L603.81 300.31 L604.31 296.99 L604.9 293.67 L605.58 290.36 L606.35 287.04 L607.2 283.72 L608.15 280.4 L609.19 277.08 L610.31 273.77 L611.52 270.45 L612.82 267.13 L614.21 263.81 L615.69 260.49 L617.25 257.18 L618.9 253.86 L620.63 250.54 L622.45 247.22 L624.36 243.9 L626.35 240.59 L628.42 237.27 L630.57 233.95 L632.81 230.63 L635.13 227.31 L637.53 224 L640.01 220.68 L642.57 217.36 L645.2 214.04 L647.92 210.72 L650.71 207.41 L653.58 204.09 L656.52 200.77 L659.54 197.45 L662.63 194.13 L665.79 190.82 L669.03 187.5 L672.33 184.18 L675.71 180.86 L679.15 177.54 L682.66 174.23 L686.24 170.91 L689.88 167.59 L693.59 164.27 L697.36 160.95 L701.19 157.64 L705.08 154.32 L709.03 151 L713.04 147.68 L717.11 144.36 L721.23 141.05 L725.4 137.73 L729.63 134.41 L733.92 131.09 L738.25 127.77 L742.63 124.46 L747.06 121.14 L751.54 117.82 L756.06 114.5 L760.63 111.18 L765.24 107.87 L769.89 104.55 L774.58 101.23 L779.31 97.91 L784.07 94.59 L788.87 91.28 L793.71 87.96 L798.57 84.64 L803.47 81.32 L808.4 78 L813.36 74.69 L818.34 71.37 L823.34 68.05 L828.38 64.73 L833.43 61.41 L838.5 58.1 L843.59 54.78 L848.7 51.46 L853.83 48.14 L858.97 44.82 L864.12 41.51 L869.28 38.19 L874.45 34.87 L879.63 31.55 L884.82 28.23 L890.01 24.92 L895.2 21.6"/>
<path d="M900.4 615.52 L894.34 612.2 L888.28 608.88 L882.22 605.57 L876.17 602.25 L870.13 598.93 L864.09 595.61 L858.07 592.29 L852.06 588.98 L846.06 585.66 L840.09 582.34 L834.12 579.02 L828.18 575.7 L822.27 572.39 L816.37 569.07 L810.5 565.75 L804.66 562.43 L798.85 559.11 L793.07 555.8 L787.32 552.48 L781.6 549.16 L775.92 545.84 L770.28 542.52 L764.68 539.21 L759.12 535.89 L753.61 532.57 L748.14 529.25 L742.71 525.93 L737.33 522.62 L732.01 519.3 L726.73 515.98 L721.51 512.66 L716.34 509.34 L711.23 506.03 L706.17 502.71 L701.17 499.39 L696.24 496.07 L691.37 492.75 L686.56 489.44 L681.81 486.12 L677.13 482.8 L672.52 479.48 L667.98 476.16 L663.51 472.85 L659.12 469.53 L654.79 466.21 L650.54 462.89 L646.37 459.57 L642.28 456.26 L638.26 452.94 L634.32 449.62 L630.47 446.3 L626.69 442.98 L623 439.67 L619.4 436.35 L615.88 433.03 L612.44 429.71 L609.1 426.39 L605.84 423.08 L602.67 419.76 L599.59 416.44 L596.61 413.12 L593.72 409.8 L590.92 406.49 L588.21 403.17 L585.6 399.85 L583.09 396.53 L580.67 393.21 L578.35 389.9 L576.13 386.58 L574.01 383.26 L571.98 379.94 L570.06 376.62 L568.24 373.31 L566.52 369.99 L564.9 366.67 L563.38 363.35 L561.96 360.03 L560.65 356.72 L559.44 353.4 L558.34 350.08 L557.34 346.76 L556.44 343.44 L555.65 340.13 L554.96 336.81 L554.38 333.49 L553.91 330.17 L553.54 326.85 L553.27 323.54 L553.11 320.22 L553.06 316.9 L553.11 313.58 L553.27 310.26 L553.54 306.95 L553.91 303.63 L554.38 300.31 L554.96 296.99 L555.65 293.67 L556.44 290.36 L557.34 287.04 L558.34 283.72 L559.44 280.4 L560.65 277.08 L561.96 273.77 L563.38 270.45 L564.9 267.13 L566.52 263.81 L568.24 260.49 L570.06 257.18 L571.98 253.86 L574.01 250.54 L576.13 247.22 L578.35 243.9 L580.67 240.59 L583.09 237.27 L585.6 233.95 L588.21 230.63 L590.92 227.31 L593.72 224 L596.61 220.68 L599.59 217.36 L602.67 214.04 L605.84 210.72 L609.1 207.41 L612.44 204.09 L615.88 200.77 L619.4 197.45 L623 194.13 L626.69 190.82 L630.47 187.5 L634.32 184.18 L638.26 180.86 L642.28 177.54 L646.37 174.23 L650.54 170.91 L654.79 167.59 L659.12 164.27 L663.51 160.95 L667.98 157.64 L672.52 154.32 L677.13 151 L681.81 147.68 L686.56 144.36 L691.37 141.05 L696.24 137.73 L701.17 134.41 L706.17 131.09 L711.23 127.77 L716.34 124.46 L721.51 121.14 L726.73 117.82 L732.01 114.5 L737.33 111.18 L742.71 107.87 L748.14 104.55 L753.61 101.23 L759.12 97.91 L764.68 94.59 L770.28 91.28 L775.92 87.96 L781.6 84.64 L787.32 81.32 L793.07 78 L798.85 74.69 L804.66 71.37 L810.5 68.05 L816.37 64.73 L822.27 61.41 L828.18 58.1 L834.12 54.78 L840.09 51.46 L846.06 48.14 L852.06 44.82 L858.07 41.51 L864.09 38.19 L870.13 34.87 L876.17 31.55 L882.22 28.23 L888.28 24.92 L894.34 21.6"/>
<path d="M900.4 615.52 L893.47 612.2 L886.55 608.88 L879.62 605.57 L872.71 602.25 L865.8 598.93 L858.91 595.61 L852.02 592.29 L845.15 588.98 L838.3 585.66 L831.47 582.34 L824.66 579.02 L817.87 575.7 L811.1 572.39 L804.37 569.07 L797.66 565.75 L790.98 562.43 L784.34 559.11 L777.73 555.8 L771.16 552.48 L764.63 549.16 L758.14 545.84 L751.7 542.52 L745.3 539.21 L738.94 535.89 L732.64 532.57 L726.38 529.25 L720.18 525.93 L714.04 522.62 L707.95 519.3 L701.92 515.98 L695.95 512.66 L690.04 509.34 L684.2 506.03 L678.42 502.71 L672.71 499.39 L667.07 496.07 L661.5 492.75 L656.01 489.44 L650.58 486.12 L645.24 482.8 L639.97 479.48 L634.78 476.16 L629.67 472.85 L624.65 469.53 L619.71 466.21 L614.85 462.89 L610.08 459.57 L605.4 456.26 L600.81 452.94 L596.31 449.62 L591.9 446.3 L587.59 442.98 L583.37 439.67 L579.25 436.35 L575.23 433.03 L571.31 429.71 L567.48 426.39 L563.76 423.08 L560.14 419.76 L556.62 416.44 L553.21 413.12 L549.91 409.8 L546.71 406.49 L543.61 403.17 L540.63 399.85 L537.76 396.53 L535 393.21 L532.35 389.9 L529.81 386.58 L527.38 383.26 L525.07 379.94 L522.87 376.62 L520.79 373.31 L518.82 369.99 L516.97 366.67 L515.23 363.35 L513.61 360.03 L512.11 356.72 L510.73 353.4 L509.47 350.08 L508.33 346.76 L507.3 343.44 L506.4 340.13 L505.61 336.81 L504.95 333.49 L504.41 330.17 L503.98 326.85 L503.68 323.54 L503.5 320.22 L503.44 316.9 L503.5 313.58 L503.68 310.26 L503.98 306.95 L504.41 303.63 L504.95 300.31 L505.61 296.99 L506.4 293.67 L507.3 290.36 L508.33 287.04 L509.47 283.72 L510.73 280.4 L512.11 277.08 L513.61 273.77 L515.23 270.45 L516.97 267.13 L518.82 263.81 L520.79 260.49 L522.87 257.18 L525.07 253.86 L527.38 250.54 L529.81 247.22 L532.35 243.9 L535 240.59 L537.76 237.27 L540.63 233.95 L543.61 230.63 L546.71 227.31 L549.91 224 L553.21 220.68 L556.62 217.36 L560.14 214.04 L563.76 210.72 L567.48 207.41 L571.31 204.09 L575.23 200.77 L579.25 197.45 L583.37 194.13 L587.59 190.82 L591.9 187.5 L596.31 184.18 L600.81 180.86 L605.4 177.54 L610.08 174.23 L614.85 170.91 L619.71 167.59 L624.65 164.27 L629.67 160.95 L634.78 157.64 L639.97 154.32 L645.24 151 L650.58 147.68 L656.01 144.36 L661.5 141.05 L667.07 137.73 L672.71 134.41 L678.42 131.09 L684.2 127.77 L690.04 124.46 L695.95 121.14 L701.92 117.82 L707.95 114.5 L714.04 111.18 L720.18 107.87 L726.38 104.55 L732.64 101.23 L738.94 97.91 L745.3 94.59 L751.7 91.28 L758.14 87.96 L764.63 84.64 L771.16 81.32 L777.73 78 L784.34 74.69 L790.98 71.37 L797.66 68.05 L804.37 64.73 L811.1 61.41 L817.87 58.1 L824.66 54.78 L831.47 51.46 L838.3 48.14 L845.15 44.82 L852.02 41.51 L858.91 38.19 L865.8 34.87 L872.71 31.55 L879.62 28.23 L886.55 24.92 L893.47 21.6"/>
<path d="M900.4 615.52 L892.61 612.2 L884.81 608.88 L877.03 605.57 L869.25 602.25 L861.48 598.93 L853.72 595.61 L845.98 592.29 L838.25 588.98 L830.54 585.66 L822.85 582.34 L815.19 579.02 L807.55 575.7 L799.94 572.39 L792.36 569.07 L784.82 565.75 L777.31 562.43 L769.83 559.11 L762.4 555.8 L755.01 552.48 L747.66 549.16 L740.36 545.84 L733.11 542.52 L725.91 539.21 L718.76 535.89 L711.67 532.57 L704.63 529.25 L697.66 525.93 L690.74 522.62 L683.89 519.3 L677.11 515.98 L670.39 512.66 L663.75 509.34 L657.18 506.03 L650.68 502.71 L644.25 499.39 L637.91 496.07 L631.64 492.75 L625.46 489.44 L619.36 486.12 L613.34 482.8 L607.42 479.48 L601.58 476.16 L595.83 472.85 L590.18 469.53 L584.62 466.21 L579.16 462.89 L573.79 459.57 L568.53 456.26 L563.36 452.94 L558.3 449.62 L553.34 446.3 L548.49 442.98 L543.75 439.67 L539.11 436.35 L534.58 433.03 L530.17 429.71 L525.87 426.39 L521.68 423.08 L517.61 419.76 L513.65 416.44 L509.81 413.12 L506.09 409.8 L502.49 406.49 L499.02 403.17 L495.66 399.85 L492.43 396.53 L489.32 393.21 L486.34 389.9 L483.48 386.58 L480.75 383.26 L478.15 379.94 L475.68 376.62 L473.33 373.31 L471.12 369.99 L469.04 366.67 L467.09 363.35 L465.27 360.03 L463.58 356.72 L462.02 353.4 L460.6 350.08 L459.32 346.76 L458.17 343.44 L457.15 340.13 L456.27 336.81 L455.52 333.49 L454.91 330.17 L454.43 326.85 L454.09 323.54 L453.89 320.22 L453.82 316.9 L453.89 313.58 L454.09 310.26 L454.43 306.95 L454.91 303.63 L455.52 300.31 L456.27 296.99 L457.15 293.67 L458.17 290.36 L459.32 287.04 L460.6 283.72 L462.02 280.4 L463.58 277.08 L465.27 273.77 L467.09 270.45 L469.04 267.13 L471.12 263.81 L473.33 260.49 L475.68 257.18 L478.15 253.86 L480.75 250.54 L483.48 247.22 L486.34 243.9 L489.32 240.59 L492.43 237.27 L495.66 233.95 L499.02 230.63 L502.49 227.31 L506.09 224 L509.81 220.68 L513.65 217.36 L517.61 214.04 L521.68 210.72 L525.87 207.41 L530.17 204.09 L534.58 200.77 L539.11 197.45 L543.75 194.13 L548.49 190.82 L553.34 187.5 L558.3 184.18 L563.36 180.86 L568.53 177.54 L573.79 174.23 L579.16 170.91 L584.62 167.59 L590.18 164.27 L595.83 160.95 L601.58 157.64 L607.42 154.32 L613.34 151 L619.36 147.68 L625.46 144.36 L631.64 141.05 L637.91 137.73 L644.25 134.41 L650.68 131.09 L657.18 127.77 L663.75 124.46 L670.39 121.14 L677.11 117.82 L683.89 114.5 L690.74 111.18 L697.66 107.87 L704.63 104.55 L711.67 101.23 L718.76 97.91 L725.91 94.59 L733.11 91.28 L740.36 87.96 L747.66 84.64 L755.01 81.32 L762.4 78 L769.83 74.69 L777.31 71.37 L784.82 68.05 L792.36 64.73 L799.94 61.41 L807.55 58.1 L815.19 54.78 L822.85 51.46 L830.54 48.14 L838.25 44.82 L845.98 41.51 L853.72 38.19 L861.48 34.87 L869.25 31.55 L877.03 28.23 L884.81 24.92 L892.61 21.6"/>
<path d="M900.4 615.52 L891.74 612.2 L883.08 608.88 L874.43 605.57 L865.79 602.25 L857.15 598.93 L848.53 595.61 L839.93 592.29 L831.34 588.98 L822.78 585.66 L814.24 582.34 L805.72 579.02 L797.23 575.7 L788.78 572.39 L780.36 569.07 L771.97 565.75 L763.63 562.43 L755.33 559.11 L747.07 555.8 L738.85 552.48 L730.69 549.16 L722.58 545.84 L714.52 542.52 L706.52 539.21 L698.58 535.89 L690.7 532.57 L682.88 529.25 L675.13 525.93 L667.45 522.62 L659.84 519.3 L652.3 515.98 L644.84 512.66 L637.45 509.34 L630.15 506.03 L622.93 502.71 L615.79 499.39 L608.74 496.07 L601.78 492.75 L594.91 489.44 L588.13 486.12 L581.45 482.8 L574.86 479.48 L568.38 476.16 L561.99 472.85 L555.71 469.53 L549.53 466.21 L543.46 462.89 L537.5 459.57 L531.65 456.26 L525.91 452.94 L520.29 449.62 L514.78 446.3 L509.39 442.98 L504.12 439.67 L498.97 436.35 L493.94 433.03 L489.03 429.71 L484.25 426.39 L479.6 423.08 L475.07 419.76 L470.68 416.44 L466.41 413.12 L462.28 409.8 L458.28 406.49 L454.42 403.17 L450.69 399.85 L447.1 396.53 L443.65 393.21 L440.33 389.9 L437.16 386.58 L434.12 383.26 L431.23 379.94 L428.49 376.62 L425.88 373.31 L423.42 369.99 L421.11 366.67 L418.94 363.35 L416.92 360.03 L415.04 356.72 L413.32 353.4 L411.74 350.08 L410.31 346.76 L409.03 343.44 L407.9 340.13 L406.92 336.81 L406.09 333.49 L405.41 330.17 L404.88 326.85 L404.5 323.54 L404.28 320.22 L404.2 316.9 L404.28 313.58 L404.5 310.26 L404.88 306.95 L405.41 303.63 L406.09 300.31 L406.92 296.99 L407.9 293.67 L409.03 290.36 L410.31 287.04 L411.74 283.72 L413.32 280.4 L415.04 277.08 L416.92 273.77 L418.94 270.45 L421.11 267.13 L423.42 263.81 L425.88 260.49 L428.49 257.18 L431.23 253.86 L434.12 250.54 L437.16 247.22 L440.33 243.9 L443.65 240.59 L447.1 237.27 L450.69 233.95 L454.42 230.63 L458.28 227.31 L462.28 224 L466.41 220.68 L470.68 217.36 L475.07 214.04 L479.6 210.72 L484.25 207.41 L489.03 204.09 L493.94 200.77 L498.97 197.45 L504.12 194.13 L509.39 190.82 L514.78 187.5 L520.29 184.18 L525.91 180.86 L531.65 177.54 L537.5 174.23 L543.46 170.91 L549.53 167.59 L555.71 164.27 L561.99 160.95 L568.38 157.64 L574.86 154.32 L581.45 151 L588.13 147.68 L594.91 144.36 L601.78 141.05 L608.74 137.73 L615.79 134.41 L622.93 131.09 L630.15 127.77 L637.45 124.46 L644.84 121.14 L652.3 117.82 L659.84 114.5 L667.45 111.18 L675.13 107.87 L682.88 104.55 L690.7 101.23 L698.58 97.91 L706.52 94.59 L714.52 91.28 L722.58 87.96 L730.69 84.64 L738.85 81.32 L747.07 78 L755.33 74.69 L763.63 71.37 L771.97 68.05 L780.36 64.73 L788.78 61.41 L797.23 58.1 L805.72 54.78 L814.24 51.46 L822.78 48.14 L831.34 44.82 L839.93 41.51 L848.53 38.19 L857.15 34.87 L865.79 31.55 L874.43 28.23 L883.08 24.92 L891.74 21.6"/>
<path d="M900.4 615.52 L890.87 612.2 L881.35 608.88 L871.83 605.57 L862.33 602.25 L852.83 598.93 L843.35 595.61 L833.88 592.29 L824.44 588.98 L815.01 585.66 L805.62 582.34 L796.25 579.02 L786.92 575.7 L777.62 572.39 L768.35 569.07 L759.13 565.75 L749.95 562.43 L740.82 559.11 L731.73 555.8 L722.7 552.48 L713.72 549.16 L704.8 545.84 L695.93 542.52 L687.13 539.21 L678.4 535.89 L669.73 532.57 L661.13 529.25 L652.6 525.93 L644.15 522.62 L635.78 519.3 L627.49 515.98 L619.28 512.66 L611.16 509.34 L603.13 506.03 L595.18 502.71 L587.33 499.39 L579.58 496.07 L571.92 492.75 L564.36 489.44 L556.9 486.12 L549.55 482.8 L542.31 479.48 L535.18 476.16 L528.15 472.85 L521.24 469.53 L514.45 466.21 L507.77 462.89 L501.21 459.57 L494.78 456.26 L488.46 452.94 L482.28 449.62 L476.22 446.3 L470.29 442.98 L464.49 439.67 L458.82 436.35 L453.29 433.03 L447.89 429.71 L442.64 426.39 L437.52 423.08 L432.54 419.76 L427.71 416.44 L423.02 413.12 L418.47 409.8 L414.07 406.49 L409.82 403.17 L405.72 399.85 L401.77 396.53 L397.97 393.21 L394.32 389.9 L390.83 386.58 L387.5 383.26 L384.32 379.94 L381.29 376.62 L378.43 373.31 L375.72 369.99 L373.18 366.67 L370.79 363.35 L368.57 360.03 L366.51 356.72 L364.61 353.4 L362.87 350.08 L361.3 346.76 L359.89 343.44 L358.65 340.13 L357.57 336.81 L356.66 333.49 L355.91 330.17 L355.33 326.85 L354.91 323.54 L354.66 320.22 L354.58 316.9 L354.66 313.58 L354.91 310.26 L355.33 306.95 L355.91 303.63 L356.66 300.31 L357.57 296.99 L358.65 293.67 L359.89 290.36 L361.3 287.04 L362.87 283.72 L364.61 280.4 L366.51 277.08 L368.57 273.77 L370.79 270.45 L373.18 267.13 L375.72 263.81 L378.43 260.49 L381.29 257.18 L384.32 253.86 L387.5 250.54 L390.83 247.22 L394.32 243.9 L397.97 240.59 L401.77 237.27 L405.72 233.95 L409.82 230.63 L414.07 227.31 L418.47 224 L423.02 220.68 L427.71 217.36 L432.54 214.04 L437.52 210.72 L442.64 207.41 L447.89 204.09 L453.29 200.77 L458.82 197.45 L464.49 194.13 L470.29 190.82 L476.22 187.5 L482.28 184.18 L488.46 180.86 L494.78 177.54 L501.21 174.23 L507.77 170.91 L514.45 167.59 L521.24 164.27 L528.15 160.95 L535.18 157.64 L542.31 154.32 L549.55 151 L556.9 147.68 L564.36 144.36 L571.92 141.05 L579.58 137.73 L587.33 134.41 L595.18 131.09 L603.13 127.77 L611.16 124.46 L619.28 121.14 L627.49 117.82 L635.78 114.5 L644.15 111.18 L652.6 107.87 L661.13 104.55 L669.73 101.23 L678.4 97.91 L687.13 94.59 L695.93 91.28 L704.8 87.96 L713.72 84.64 L722.7 81.32 L731.73 78 L740.82 74.69 L749.95 71.37 L759.13 68.05 L768.35 64.73 L777.62 61.41 L786.92 58.1 L796.25 54.78 L805.62 51.46 L815.01 48.14 L824.44 44.82 L833.88 41.51 L843.35 38.19 L852.83 34.87 L862.33 31.55 L871.83 28.23 L881.35 24.92 L890.87 21.6"/>
<path d="M900.4 615.52 L890.01 612.2 L879.62 608.88 L869.24 605.57 L858.86 602.25 L848.5 598.93 L838.16 595.61 L827.83 592.29 L817.53 588.98 L807.25 585.66 L797 582.34 L786.78 579.02 L776.6 575.7 L766.46 572.39 L756.35 569.07 L746.29 565.75 L736.27 562.43 L726.31 559.11 L716.4 555.8 L706.54 552.48 L696.75 549.16 L687.01 545.84 L677.34 542.52 L667.74 539.21 L658.21 535.89 L648.76 532.57 L639.38 529.25 L630.08 525.93 L620.86 522.62 L611.72 519.3 L602.68 515.98 L593.73 512.66 L584.86 509.34 L576.1 506.03 L567.43 502.71 L558.87 499.39 L550.41 496.07 L542.06 492.75 L533.81 489.44 L525.68 486.12 L517.66 482.8 L509.76 479.48 L501.97 476.16 L494.31 472.85 L486.77 469.53 L479.36 466.21 L472.08 462.89 L464.92 459.57 L457.9 456.26 L451.02 452.94 L444.27 449.62 L437.66 446.3 L431.19 442.98 L424.86 439.67 L418.68 436.35 L412.64 433.03 L406.76 429.71 L401.02 426.39 L395.44 423.08 L390.01 419.76 L384.73 416.44 L379.62 413.12 L374.66 409.8 L369.86 406.49 L365.22 403.17 L360.75 399.85 L356.44 396.53 L352.29 393.21 L348.32 389.9 L344.51 386.58 L340.87 383.26 L337.4 379.94 L334.1 376.62 L330.98 373.31 L328.03 369.99 L325.25 366.67 L322.65 363.35 L320.22 360.03 L317.97 356.72 L315.9 353.4 L314.01 350.08 L312.29 346.76 L310.75 343.44 L309.4 340.13 L308.22 336.81 L307.23 333.49 L306.41 330.17 L305.78 326.85 L305.32 323.54 L305.05 320.22 L304.96 316.9 L305.05 313.58 L305.32 310.26 L305.78 306.95 L306.41 303.63 L307.23 300.31 L308.22 296.99 L309.4 293.67 L310.75 290.36 L312.29 287.04 L314.01 283.72 L315.9 280.4 L317.97 277.08 L320.22 273.77 L322.65 270.45 L325.25 267.13 L328.03 263.81 L330.98 260.49 L334.1 257.18 L337.4 253.86 L340.87 250.54 L344.51 247.22 L348.32 243.9 L352.29 240.59 L356.44 237.27 L360.75 233.95 L365.22 230.63 L369.86 227.31 L374.66 224 L379.62 220.68 L384.73 217.36 L390.01 214.04 L395.44 210.72 L401.02 207.41 L406.76 204.09 L412.64 200.77 L418.68 197.45 L424.86 194.13 L431.19 190.82 L437.66 187.5 L444.27 184.18 L451.02 180.86 L457.9 177.54 L464.92 174.23 L472.08 170.91 L479.36 167.59 L486.77 164.27 L494.31 160.95 L501.97 157.64 L509.76 154.32 L517.66 151 L525.68 147.68 L533.81 144.36 L542.06 141.05 L550.41 137.73 L558.87 134.41 L567.43 131.09 L576.1 127.77 L584.86 124.46 L593.73 121.14 L602.68 117.82 L611.72 114.5 L620.86 111.18 L630.08 107.87 L639.38 104.55 L648.76 101.23 L658.21 97.91 L667.74 94.59 L677.34 91.28 L687.01 87.96 L696.75 84.64 L706.54 81.32 L716.4 78 L726.31 74.69 L736.27 71.37 L746.29 68.05 L756.35 64.73 L766.46 61.41 L776.6 58.1 L786.78 54.78 L797 51.46 L807.25 48.14 L817.53 44.82 L827.83 41.51 L838.16 38.19 L848.5 34.87 L858.86 31.55 L869.24 28.23 L879.62 24.92 L890.01 21.6"/>
</g><g stroke-dashoffset="1.0">
<path d="M1054.51 566 H746.29"/>
<path d="M1198.12 516 H602.68"/>
<path d="M1321.44 466 H479.36"/>
<path d="M1416.07 416 H384.73"/>
<path d="M1475.55 367 H325.25"/>
<path d="M1495.84 317 H304.96"/>
<path d="M1475.55 267 H325.25"/>
<path d="M1416.07 217 H384.73"/>
<path d="M1321.44 168 H479.36"/>
<path d="M1198.12 118 H602.68"/>
<path d="M1054.51 68 H746.29"/>
</g></g>
<g font-family="'Liberation Sans', sans-serif" fill="#808080">
<text x="289.05" y="327" font-size="10.17" textLength="25.72" lengthAdjust="spacingAndGlyphs">+180</text><circle cx="318.52" cy="319.5" r="0.95" fill="none" stroke="#808080" stroke-width="0.7"/>
<text x="388.44" y="327" font-size="10.17" textLength="25.72" lengthAdjust="spacingAndGlyphs">+150</text><circle cx="417.91" cy="319.5" r="0.95" fill="none" stroke="#808080" stroke-width="0.7"/>
<text x="487.83" y="327" font-size="10.17" textLength="25.72" lengthAdjust="spacingAndGlyphs">+120</text><circle cx="517.3" cy="319.5" r="0.95" fill="none" stroke="#808080" stroke-width="0.7"/>
<text x="590.26" y="327" font-size="10.17" textLength="19.62" lengthAdjust="spacingAndGlyphs">+90</text><circle cx="613.63" cy="319.5" r="0.95" fill="none" stroke="#808080" stroke-width="0.7"/>
<text x="689.65" y="327" font-size="10.17" textLength="19.62" lengthAdjust="spacingAndGlyphs">+60</text><circle cx="713.02" cy="319.5" r="0.95" fill="none" stroke="#808080" stroke-width="0.7"/>
<text x="789.04" y="327" font-size="10.17" textLength="19.62" lengthAdjust="spacingAndGlyphs">+30</text><circle cx="812.41" cy="319.5" r="0.95" fill="none" stroke="#808080" stroke-width="0.7"/>
<text x="891.47" y="327" font-size="10.17" textLength="13.54" lengthAdjust="spacingAndGlyphs">+0</text><circle cx="908.75" cy="319.5" r="0.95" fill="none" stroke="#808080" stroke-width="0.7"/>
<text x="984.78" y="327" font-size="10.17" textLength="25.72" lengthAdjust="spacingAndGlyphs">+330</text><circle cx="1014.25" cy="319.5" r="0.95" fill="none" stroke="#808080" stroke-width="0.7"/>
<text x="1084.17" y="327" font-size="10.17" textLength="25.72" lengthAdjust="spacingAndGlyphs">+300</text><circle cx="1113.64" cy="319.5" r="0.95" fill="none" stroke="#808080" stroke-width="0.7"/>
<text x="1183.56" y="327" font-size="10.17" textLength="25.72" lengthAdjust="spacingAndGlyphs">+270</text><circle cx="1213.03" cy="319.5" r="0.95" fill="none" stroke="#808080" stroke-width="0.7"/>
<text x="1282.95" y="327" font-size="10.17" textLength="25.72" lengthAdjust="spacingAndGlyphs">+240</text><circle cx="1312.42" cy="319.5" r="0.95" fill="none" stroke="#808080" stroke-width="0.7"/>
<text x="1382.34" y="327" font-size="10.17" textLength="25.72" lengthAdjust="spacingAndGlyphs">+210</text><circle cx="1411.81" cy="319.5" r="0.95" fill="none" stroke="#808080" stroke-width="0.7"/>
<text x="1481.73" y="327" font-size="10.17" textLength="25.72" lengthAdjust="spacingAndGlyphs">+180</text><circle cx="1511.2" cy="319.5" r="0.95" fill="none" stroke="#808080" stroke-width="0.7"/>
<text x="888.43" y="16.8" font-size="10.17" textLength="19.62" lengthAdjust="spacingAndGlyphs">+90</text><circle cx="911.8" cy="9.3" r="0.95" fill="none" stroke="#808080" stroke-width="0.7"/>
<text x="888.43" y="115.5" font-size="10.17" textLength="19.62" lengthAdjust="spacingAndGlyphs">+60</text><circle cx="911.8" cy="108" r="0.95" fill="none" stroke="#808080" stroke-width="0.7"/>
<text x="888.43" y="214.8" font-size="10.17" textLength="19.62" lengthAdjust="spacingAndGlyphs">+30</text><circle cx="911.8" cy="207.3" r="0.95" fill="none" stroke="#808080" stroke-width="0.7"/>
<text x="888.43" y="425.8" font-size="10.17" textLength="19.63" lengthAdjust="spacingAndGlyphs">−30</text><circle cx="911.8" cy="418.3" r="0.95" fill="none" stroke="#808080" stroke-width="0.7"/>
<text x="888.43" y="525.8" font-size="10.17" textLength="19.63" lengthAdjust="spacingAndGlyphs">−60</text><circle cx="911.8" cy="518.3" r="0.95" fill="none" stroke="#808080" stroke-width="0.7"/>
<text x="888.43" y="625" font-size="10.17" textLength="19.63" lengthAdjust="spacingAndGlyphs">−90</text><circle cx="911.8" cy="617.5" r="0.95" fill="none" stroke="#808080" stroke-width="0.7"/>
</g>
<line x1="849" y1="51.7" x2="857" y2="44" stroke="#808080" stroke-width="1"/>
<rect x="848" y="52" width="2" height="2" fill="#6a1b9a"/>
<g font-family="'Liberation Mono', monospace" fill="#fff">
<text x="303.7" y="21.9" font-size="14.91" textLength="50.17" lengthAdjust="spacingAndGlyphs">HR000V</text>
<text x="303.7" y="35.1" font-size="14.91" textLength="317.75" lengthAdjust="spacingAndGlyphs">Beg: 20251017 17:49:11 (sol = 204.26°)</text>
<text x="303.7" y="48.3" font-size="14.91" textLength="317.75" lengthAdjust="spacingAndGlyphs">End: 20251017 17:49:11 (sol = 204.26°)</text>
<text x="303.7" y="60.5" font-size="14.91" textLength="317.75" lengthAdjust="spacingAndGlyphs">--------------------------------------</text>
<text x="303.7" y="74.7" font-size="14.91" textLength="50.17" lengthAdjust="spacingAndGlyphs">...: 1</text>
</g>
<line x1="1019.5" y1="637.8" x2="1019.5" y2="842.4" stroke="#ff0000" stroke-width="1.6" stroke-dasharray="5.14 2.22"/>
<g>
<rect x="106" y="831.91" width="22.9" height="4.17" fill="#bddf26"/>
<rect x="164" y="831.91" width="179.9" height="4.17" fill="#bddf26"/>
<rect x="365.1" y="831.91" width="257.9" height="4.17" fill="#bddf26"/>
<rect x="634.1" y="831.91" width="150.8" height="4.17" fill="#bddf26"/>
<rect x="805.1" y="831.91" width="92.8" height="4.17" fill="#bddf26"/>
<rect x="918.1" y="831.91" width="52.7" height="4.17" fill="#bddf26"/>
<rect x="981.9" y="831.91" width="82" height="4.17" fill="#bddf26"/>
<rect x="1080" y="831.91" width="121.1" height="4.17" fill="#bddf26"/>
<rect x="1241" y="831.91" width="82" height="4.17" fill="#bddf26"/>
<rect x="1334.1" y="831.91" width="18.7" height="4.17" fill="#bddf26"/>
<rect x="1378.1" y="831.91" width="62.8" height="4.17" fill="#bddf26"/>
<rect x="1456.2" y="831.91" width="52.7" height="4.17" fill="#bddf26"/>
<rect x="1520" y="831.91" width="24" height="4.17" fill="#bddf26"/>
<rect x="1721.1" y="831.91" width="22.8" height="4.17" fill="#bddf26"/>
<rect x="1755.1" y="831.91" width="23.8" height="4.17" fill="#bddf26"/>
<rect x="164" y="815.91" width="24" height="4.17" fill="#81d34d"/>
<rect x="223" y="815.91" width="63.1" height="4.17" fill="#81d34d"/>
<rect x="311" y="815.91" width="29.1" height="4.17" fill="#81d34d"/>
<rect x="365.1" y="815.91" width="125.8" height="4.17" fill="#81d34d"/>
<rect x="507" y="815.91" width="146" height="4.17" fill="#81d34d"/>
<rect x="703.1" y="815.91" width="32.8" height="4.17" fill="#81d34d"/>
<rect x="770.9" y="815.91" width="73.1" height="4.17" fill="#81d34d"/>
<rect x="869" y="815.91" width="116.9" height="4.17" fill="#81d34d"/>
<rect x="1000.8" y="815.91" width="14" height="4.17" fill="#81d34d"/>
<rect x="1060" y="815.91" width="150.9" height="4.17" fill="#81d34d"/>
<rect x="1241" y="815.91" width="24" height="4.17" fill="#81d34d"/>
<rect x="1290.1" y="815.91" width="23.8" height="4.17" fill="#81d34d"/>
<rect x="1339.2" y="815.91" width="23.8" height="4.17" fill="#81d34d"/>
<rect x="1383" y="815.91" width="42.9" height="4.17" fill="#81d34d"/>
<rect x="1456.2" y="815.91" width="23.8" height="4.17" fill="#81d34d"/>
<rect x="1545" y="815.91" width="23" height="4.17" fill="#81d34d"/>
<rect x="164" y="799.91" width="24" height="4.17" fill="#4ec36b"/>
<rect x="257" y="799.91" width="229" height="4.17" fill="#4ec36b"/>
<rect x="507" y="799.91" width="106.9" height="4.17" fill="#4ec36b"/>
<rect x="623.9" y="799.91" width="92" height="4.17" fill="#4ec36b"/>
<rect x="727.1" y="799.91" width="96.9" height="4.17" fill="#4ec36b"/>
<rect x="947" y="799.91" width="200.1" height="4.17" fill="#4ec36b"/>
<rect x="1158.2" y="799.91" width="86.8" height="4.17" fill="#4ec36b"/>
<rect x="1255.9" y="799.91" width="185" height="4.17" fill="#4ec36b"/>
<rect x="1456.2" y="799.91" width="23.8" height="4.17" fill="#4ec36b"/>
<rect x="1549.1" y="799.91" width="23.8" height="4.17" fill="#4ec36b"/>
<rect x="194.1" y="783.91" width="23" height="4.17" fill="#2ab07f"/>
<rect x="321" y="783.91" width="185" height="4.17" fill="#2ab07f"/>
<rect x="517" y="783.91" width="23" height="4.17" fill="#2ab07f"/>
<rect x="555.9" y="783.91" width="126" height="4.17" fill="#2ab07f"/>
<rect x="805.1" y="783.91" width="23.8" height="4.17" fill="#2ab07f"/>
<rect x="951.9" y="783.91" width="18.9" height="4.17" fill="#2ab07f"/>
<rect x="987" y="783.91" width="135.9" height="4.17" fill="#2ab07f"/>
<rect x="1153.1" y="783.91" width="62.7" height="4.17" fill="#2ab07f"/>
<rect x="1241" y="783.91" width="24" height="4.17" fill="#2ab07f"/>
<rect x="1315" y="783.91" width="23.1" height="4.17" fill="#2ab07f"/>
<rect x="1393.1" y="783.91" width="22.8" height="4.17" fill="#2ab07f"/>
<rect x="1461.1" y="783.91" width="185" height="4.17" fill="#2ab07f"/>
<rect x="340.1" y="767.91" width="28.9" height="4.17" fill="#1e9b8a"/>
<rect x="408.9" y="767.91" width="38" height="4.17" fill="#1e9b8a"/>
<rect x="468" y="767.91" width="22.9" height="4.17" fill="#1e9b8a"/>
<rect x="526" y="767.91" width="18.9" height="4.17" fill="#1e9b8a"/>
<rect x="561" y="767.91" width="28" height="4.17" fill="#1e9b8a"/>
<rect x="615" y="767.91" width="33.1" height="4.17" fill="#1e9b8a"/>
<rect x="957" y="767.91" width="28.9" height="4.17" fill="#1e9b8a"/>
<rect x="1060.2" y="767.91" width="23.8" height="4.17" fill="#1e9b8a"/>
<rect x="1099.1" y="767.91" width="23.8" height="4.17" fill="#1e9b8a"/>
<rect x="1158.2" y="767.91" width="32.9" height="4.17" fill="#1e9b8a"/>
<rect x="1246.1" y="767.91" width="24" height="4.17" fill="#1e9b8a"/>
<rect x="1422.2" y="767.91" width="86.7" height="4.17" fill="#1e9b8a"/>
<rect x="418.9" y="751.91" width="23.1" height="4.17" fill="#25858e"/>
<rect x="531" y="751.91" width="24" height="4.17" fill="#25858e"/>
<rect x="566.1" y="751.91" width="22.9" height="4.17" fill="#25858e"/>
<rect x="619" y="751.91" width="122" height="4.17" fill="#25858e"/>
<rect x="967" y="751.91" width="165.9" height="4.17" fill="#25858e"/>
<rect x="1182" y="751.91" width="161" height="4.17" fill="#25858e"/>
<rect x="1466.2" y="751.91" width="23.8" height="4.17" fill="#25858e"/>
<rect x="428.9" y="735.91" width="23.1" height="4.17" fill="#2d708e"/>
<rect x="575" y="735.91" width="156" height="4.17" fill="#2d708e"/>
<rect x="991" y="735.91" width="111.9" height="4.17" fill="#2d708e"/>
<rect x="1114" y="735.91" width="106.9" height="4.17" fill="#2d708e"/>
<rect x="1261.2" y="735.91" width="27.8" height="4.17" fill="#2d708e"/>
<rect x="1486.2" y="735.91" width="22.7" height="4.17" fill="#2d708e"/>
<rect x="589.9" y="719.91" width="24.2" height="4.17" fill="#375a8c"/>
<rect x="654" y="719.91" width="116" height="4.17" fill="#375a8c"/>
<rect x="1070" y="719.91" width="170" height="4.17" fill="#375a8c"/>
<rect x="1261.2" y="719.91" width="22.7" height="4.17" fill="#375a8c"/>
<rect x="595" y="703.91" width="136" height="4.17" fill="#424086"/>
<rect x="1089.1" y="703.91" width="28.7" height="4.17" fill="#424086"/>
<rect x="1197.1" y="703.91" width="23.8" height="4.17" fill="#424086"/>
<rect x="1270.1" y="703.91" width="52.9" height="4.17" fill="#424086"/>
<rect x="1108.9" y="687.91" width="24" height="4.17" fill="#482475"/>
</g>
<g fill="none" stroke="#fff" stroke-opacity="0.33" stroke-width="2.08" stroke-dasharray="2.08 3.44">
<path d="M74 841.75 V637.8"/>
<path d="M218 841.75 V637.8"/>
<path d="M364 841.75 V637.8"/>
<path d="M504 841.75 V637.8"/>
<path d="M649 841.75 V637.8"/>
<path d="M795 841.75 V637.8"/>
<path d="M938 841.75 V637.8"/>
<path d="M1089 841.75 V637.8"/>
<path d="M1237 841.75 V637.8"/>
<path d="M1391 841.75 V637.8"/>
<path d="M1545 841.75 V637.8"/>
<path d="M1684 841.75 V637.8"/>
</g>
<g stroke="#fff" stroke-width="2.08" fill="none">
<path d="M112.83 834H121.17M117 829.83V838.17"/>
<path d="M240.73 834H249.07M244.9 829.83V838.17"/>
<path d="M509.83 834H518.17M514 829.83V838.17"/>
<path d="M705.53 834H713.87M709.7 829.83V838.17"/>
<path d="M831.53 834H839.87M835.7 829.83V838.17"/>
<path d="M959.63 834H967.97M963.8 829.83V838.17"/>
<path d="M984.53 834H992.87M988.7 829.83V838.17"/>
<path d="M1113.43 834H1121.77M1117.6 829.83V838.17"/>
<path d="M1292.53 834H1300.87M1296.7 829.83V838.17"/>
<path d="M1338.63 834H1346.97M1342.8 829.83V838.17"/>
<path d="M1409.53 834H1417.87M1413.7 829.83V838.17"/>
<path d="M1478.43 834H1486.77M1482.6 829.83V838.17"/>
<path d="M1527.73 834H1536.07M1531.9 829.83V838.17"/>
<path d="M1728.43 834H1736.77M1732.6 829.83V838.17"/>
<path d="M1762.63 834H1770.97M1766.8 829.83V838.17"/>
<path d="M171.63 818H179.97M175.8 813.83V822.17"/>
<path d="M254.53 818H262.87M258.7 813.83V822.17"/>
<path d="M322.53 818H330.87M326.7 813.83V822.17"/>
<path d="M435.73 818H444.07M439.9 813.83V822.17"/>
<path d="M597.83 818H606.17M602 813.83V822.17"/>
<path d="M714.83 818H723.17M719 813.83V822.17"/>
<path d="M791.53 818H799.87M795.7 813.83V822.17"/>
<path d="M937.83 818H946.17M942 813.83V822.17"/>
<path d="M1003.43 818H1011.77M1007.6 813.83V822.17"/>
<path d="M1150.63 818H1158.97M1154.8 813.83V822.17"/>
<path d="M1248.73 818H1257.07M1252.9 813.83V822.17"/>
<path d="M1297.63 818H1305.97M1301.8 813.83V822.17"/>
<path d="M1346.53 818H1354.87M1350.7 813.83V822.17"/>
<path d="M1400.43 818H1408.77M1404.6 813.83V822.17"/>
<path d="M1463.73 818H1472.07M1467.9 813.83V822.17"/>
<path d="M1551.73 818H1560.07M1555.9 813.83V822.17"/>
<path d="M173.43 802H181.77M177.6 797.83V806.17"/>
<path d="M377.83 802H386.17M382 797.83V806.17"/>
<path d="M543.63 802H551.97M547.8 797.83V806.17"/>
<path d="M680.53 802H688.87M684.7 797.83V806.17"/>
<path d="M739.53 802H747.87M743.7 797.83V806.17"/>
<path d="M1072.83 802H1081.17M1077 797.83V806.17"/>
<path d="M1214.83 802H1223.17M1219 797.83V806.17"/>
<path d="M1302.73 802H1311.07M1306.9 797.83V806.17"/>
<path d="M1463.73 802H1472.07M1467.9 797.83V806.17"/>
<path d="M1556.63 802H1564.97M1560.8 797.83V806.17"/>
<path d="M200.73 786H209.07M204.9 781.83V790.17"/>
<path d="M399.63 786H407.97M403.8 781.83V790.17"/>
<path d="M523.73 786H532.07M527.9 781.83V790.17"/>
<path d="M637.73 786H646.07M641.9 781.83V790.17"/>
<path d="M812.63 786H820.97M816.8 781.83V790.17"/>
<path d="M957.73 786H966.07M961.9 781.83V790.17"/>
<path d="M1037.63 786H1045.97M1041.8 781.83V790.17"/>
<path d="M1184.63 786H1192.97M1188.8 781.83V790.17"/>
<path d="M1248.73 786H1257.07M1252.9 781.83V790.17"/>
<path d="M1321.63 786H1329.97M1325.8 781.83V790.17"/>
<path d="M1400.43 786H1408.77M1404.6 781.83V790.17"/>
<path d="M1542.53 786H1550.87M1546.7 781.83V790.17"/>
<path d="M354.63 770H362.97M358.8 765.83V774.17"/>
<path d="M425.53 770H433.87M429.7 765.83V774.17"/>
<path d="M475.63 770H483.97M479.8 765.83V774.17"/>
<path d="M533.73 770H542.07M537.9 765.83V774.17"/>
<path d="M569.53 770H577.87M573.7 765.83V774.17"/>
<path d="M629.53 770H637.87M633.7 765.83V774.17"/>
<path d="M971.73 770H980.07M975.9 765.83V774.17"/>
<path d="M1067.73 770H1076.07M1071.9 765.83V774.17"/>
<path d="M1106.63 770H1114.97M1110.8 765.83V774.17"/>
<path d="M1174.83 770H1183.17M1179 765.83V774.17"/>
<path d="M1253.63 770H1261.97M1257.8 765.83V774.17"/>
<path d="M1463.73 770H1472.07M1467.9 765.83V774.17"/>
<path d="M426.23 754H434.57M430.4 749.83V758.17"/>
<path d="M538.73 754H547.07M542.9 749.83V758.17"/>
<path d="M572.53 754H580.87M576.7 749.83V758.17"/>
<path d="M702.73 754H711.07M706.9 749.83V758.17"/>
<path d="M1091.73 754H1100.07M1095.9 749.83V758.17"/>
<path d="M1267.83 754H1276.17M1272 749.83V758.17"/>
<path d="M1473.73 754H1482.07M1477.9 749.83V758.17"/>
<path d="M435.73 738H444.07M439.9 733.83V742.17"/>
<path d="M629.53 738H637.87M633.7 733.83V742.17"/>
<path d="M1036.53 738H1044.87M1040.7 733.83V742.17"/>
<path d="M1165.73 738H1174.07M1169.9 733.83V742.17"/>
<path d="M1272.53 738H1280.87M1276.7 733.83V742.17"/>
<path d="M1493.53 738H1501.87M1497.7 733.83V742.17"/>
<path d="M597.83 722H606.17M602 717.83V726.17"/>
<path d="M724.83 722H733.17M729 717.83V726.17"/>
<path d="M1184.83 722H1193.17M1189 717.83V726.17"/>
<path d="M1267.83 722H1276.17M1272 717.83V726.17"/>
<path d="M685.73 706H694.07M689.9 701.83V710.17"/>
<path d="M1099.43 706H1107.77M1103.6 701.83V710.17"/>
<path d="M1204.63 706H1212.97M1208.8 701.83V710.17"/>
<path d="M1297.63 706H1305.97M1301.8 701.83V710.17"/>
<path d="M1116.63 690H1124.97M1120.8 685.83V694.17"/>
</g>
<g font-family="'Liberation Sans', sans-serif" fill="#fff">
<text x="107.25" y="831" font-size="11.13" textLength="19.71" lengthAdjust="spacingAndGlyphs">KSE</text>
<text x="243.9" y="831" font-size="11.13" textLength="19.98" lengthAdjust="spacingAndGlyphs">ETA</text>
<text x="482.33" y="831" font-size="11.13" textLength="22.07" lengthAdjust="spacingAndGlyphs">NZC</text>
<text x="697.01" y="831" font-size="11.13" textLength="22.92" lengthAdjust="spacingAndGlyphs">NDA</text>
<text x="842.23" y="831" font-size="11.13" textLength="19.11" lengthAdjust="spacingAndGlyphs">SPE</text>
<text x="933.35" y="831" font-size="11.13" textLength="22.39" lengthAdjust="spacingAndGlyphs">ARD</text>
<text x="1012.24" y="831" font-size="11.13" textLength="20.94" lengthAdjust="spacingAndGlyphs">EGE</text>
<text x="1128.86" y="831" font-size="11.13" textLength="21.22" lengthAdjust="spacingAndGlyphs">NTA</text>
<text x="1269.47" y="831" font-size="11.13" textLength="24.86" lengthAdjust="spacingAndGlyphs">MON</text>
<text x="1334.54" y="831" font-size="11.13" textLength="21.4" lengthAdjust="spacingAndGlyphs">URS</text>
<text x="1398.16" y="831" font-size="11.13" textLength="21.68" lengthAdjust="spacingAndGlyphs">AHY</text>
<text x="1470.64" y="831" font-size="11.13" textLength="24.67" lengthAdjust="spacingAndGlyphs">GUM</text>
<text x="1521.2" y="831" font-size="11.13" textLength="22.73" lengthAdjust="spacingAndGlyphs">OHY</text>
<text x="1721.2" y="831" font-size="11.13" textLength="21.42" lengthAdjust="spacingAndGlyphs">XHE</text>
<text x="1758.03" y="831" font-size="11.13" textLength="16.65" lengthAdjust="spacingAndGlyphs">EVI</text>
<text x="165.51" y="815" font-size="11.13" textLength="21.33" lengthAdjust="spacingAndGlyphs">AVB</text>
<text x="244.93" y="815" font-size="11.13" textLength="18.93" lengthAdjust="spacingAndGlyphs">ELY</text>
<text x="316.39" y="815" font-size="11.13" textLength="23.35" lengthAdjust="spacingAndGlyphs">CAM</text>
<text x="420.59" y="815" font-size="11.13" textLength="21.11" lengthAdjust="spacingAndGlyphs">SSG</text>
<text x="571.02" y="815" font-size="11.13" textLength="20.57" lengthAdjust="spacingAndGlyphs">PCA</text>
<text x="707.65" y="815" font-size="11.13" textLength="22.79" lengthAdjust="spacingAndGlyphs">AUD</text>
<text x="796.39" y="815" font-size="11.13" textLength="22.29" lengthAdjust="spacingAndGlyphs">AUR</text>
<text x="917.94" y="815" font-size="11.13" textLength="21.67" lengthAdjust="spacingAndGlyphs">DSX</text>
<text x="996.52" y="815" font-size="11.13" textLength="23.07" lengthAdjust="spacingAndGlyphs">OCU</text>
<text x="1124.16" y="815" font-size="11.13" textLength="22.27" lengthAdjust="spacingAndGlyphs">OER</text>
<text x="1241.31" y="815" font-size="11.13" textLength="22.81" lengthAdjust="spacingAndGlyphs">DKD</text>
<text x="1290.13" y="815" font-size="11.13" textLength="21.73" lengthAdjust="spacingAndGlyphs">DSV</text>
<text x="1341.39" y="815" font-size="11.13" textLength="19.63" lengthAdjust="spacingAndGlyphs">ALY</text>
<text x="1397.03" y="815" font-size="11.13" textLength="16" lengthAdjust="spacingAndGlyphs">JLE</text>
<text x="1458.32" y="815" font-size="11.13" textLength="20.89" lengthAdjust="spacingAndGlyphs">SCC</text>
<text x="1545.9" y="815" font-size="11.13" textLength="19.61" lengthAdjust="spacingAndGlyphs">FEV</text>
<text x="166.06" y="799" font-size="11.13" textLength="19.51" lengthAdjust="spacingAndGlyphs">LYR</text>
<text x="362.22" y="799" font-size="11.13" textLength="19.98" lengthAdjust="spacingAndGlyphs">JMC</text>
<text x="554.49" y="799" font-size="11.13" textLength="16.46" lengthAdjust="spacingAndGlyphs">JPE</text>
<text x="659.44" y="799" font-size="11.13" textLength="20.87" lengthAdjust="spacingAndGlyphs">PAU</text>
<text x="768.91" y="799" font-size="11.13" textLength="17.92" lengthAdjust="spacingAndGlyphs">NIA</text>
<text x="1037.19" y="799" font-size="11.13" textLength="19.97" lengthAdjust="spacingAndGlyphs">STA</text>
<text x="1191.25" y="799" font-size="11.13" textLength="24.14" lengthAdjust="spacingAndGlyphs">NOO</text>
<text x="1338.55" y="799" font-size="11.13" textLength="24.43" lengthAdjust="spacingAndGlyphs">COM</text>
<text x="1456.2" y="799" font-size="11.13" textLength="22.15" lengthAdjust="spacingAndGlyphs">NCC</text>
<text x="1550.01" y="799" font-size="11.13" textLength="20.44" lengthAdjust="spacingAndGlyphs">FED</text>
<text x="196.16" y="783" font-size="11.13" textLength="18" lengthAdjust="spacingAndGlyphs">HVI</text>
<text x="407.65" y="783" font-size="11.13" textLength="17.45" lengthAdjust="spacingAndGlyphs">ARI</text>
<text x="518.36" y="783" font-size="11.13" textLength="20.8" lengthAdjust="spacingAndGlyphs">SZC</text>
<text x="611.13" y="783" font-size="11.13" textLength="20.95" lengthAdjust="spacingAndGlyphs">CAP</text>
<text x="806.32" y="783" font-size="11.13" textLength="21.76" lengthAdjust="spacingAndGlyphs">NUE</text>
<text x="953.08" y="783" font-size="11.13" textLength="22.19" lengthAdjust="spacingAndGlyphs">OCT</text>
<text x="1048.39" y="783" font-size="11.13" textLength="18.49" lengthAdjust="spacingAndGlyphs">ORI</text>
<text x="1171.46" y="783" font-size="11.13" textLength="24.37" lengthAdjust="spacingAndGlyphs">AMO</text>
<text x="1242.4" y="783" font-size="11.13" textLength="21.36" lengthAdjust="spacingAndGlyphs">DPC</text>
<text x="1317.69" y="783" font-size="11.13" textLength="17.37" lengthAdjust="spacingAndGlyphs">XVI</text>
<text x="1392.97" y="783" font-size="11.13" textLength="22.98" lengthAdjust="spacingAndGlyphs">QUA</text>
<text x="1545.83" y="783" font-size="11.13" textLength="22" lengthAdjust="spacingAndGlyphs">AAN</text>
<text x="346.81" y="767" font-size="11.13" textLength="21.62" lengthAdjust="spacingAndGlyphs">TAH</text>
<text x="421.37" y="767" font-size="11.13" textLength="17.54" lengthAdjust="spacingAndGlyphs">JEA</text>
<text x="472.6" y="767" font-size="11.13" textLength="13.34" lengthAdjust="spacingAndGlyphs">JIP</text>
<text x="528.37" y="767" font-size="11.13" textLength="18.92" lengthAdjust="spacingAndGlyphs">PPS</text>
<text x="567" y="767" font-size="11.13" textLength="20.95" lengthAdjust="spacingAndGlyphs">ZCS</text>
<text x="619.05" y="767" font-size="11.13" textLength="23.65" lengthAdjust="spacingAndGlyphs">GDR</text>
<text x="962.21" y="767" font-size="11.13" textLength="22.33" lengthAdjust="spacingAndGlyphs">DRA</text>
<text x="1060.47" y="767" font-size="11.13" textLength="22.27" lengthAdjust="spacingAndGlyphs">LUM</text>
<text x="1100.3" y="767" font-size="11.13" textLength="20.95" lengthAdjust="spacingAndGlyphs">RPU</text>
<text x="1163.44" y="767" font-size="11.13" textLength="21.7" lengthAdjust="spacingAndGlyphs">THA</text>
<text x="1247.32" y="767" font-size="11.13" textLength="20.31" lengthAdjust="spacingAndGlyphs">PSU</text>
<text x="1457.43" y="767" font-size="11.13" textLength="21.46" lengthAdjust="spacingAndGlyphs">XCB</text>
<text x="421.8" y="751" font-size="11.13" textLength="18.2" lengthAdjust="spacingAndGlyphs">JRC</text>
<text x="532.39" y="751" font-size="11.13" textLength="22.14" lengthAdjust="spacingAndGlyphs">CAN</text>
<text x="566.34" y="751" font-size="11.13" textLength="20.71" lengthAdjust="spacingAndGlyphs">FAN</text>
<text x="670.03" y="751" font-size="11.13" textLength="20.19" lengthAdjust="spacingAndGlyphs">PER</text>
<text x="1042.05" y="751" font-size="11.13" textLength="20.8" lengthAdjust="spacingAndGlyphs">CTA</text>
<text x="1251.37" y="751" font-size="11.13" textLength="22.1" lengthAdjust="spacingAndGlyphs">HYD</text>
<text x="1466.86" y="751" font-size="11.13" textLength="23.71" lengthAdjust="spacingAndGlyphs">XUM</text>
<text x="429.07" y="735" font-size="11.13" textLength="23.01" lengthAdjust="spacingAndGlyphs">COR</text>
<text x="645.04" y="735" font-size="11.13" textLength="21.65" lengthAdjust="spacingAndGlyphs">SDA</text>
<text x="1038.05" y="735" font-size="11.13" textLength="17.81" lengthAdjust="spacingAndGlyphs">LMI</text>
<text x="1159.1" y="735" font-size="11.13" textLength="20.46" lengthAdjust="spacingAndGlyphs">LEO</text>
<text x="1265.9" y="735" font-size="11.13" textLength="21" lengthAdjust="spacingAndGlyphs">EHY</text>
<text x="1486.85" y="735" font-size="11.13" textLength="20.91" lengthAdjust="spacingAndGlyphs">ECV</text>
<text x="592.68" y="719" font-size="11.13" textLength="18.1" lengthAdjust="spacingAndGlyphs">JXA</text>
<text x="703.33" y="719" font-size="11.13" textLength="22.06" lengthAdjust="spacingAndGlyphs">KCG</text>
<text x="1143.37" y="719" font-size="11.13" textLength="22.96" lengthAdjust="spacingAndGlyphs">AND</text>
<text x="1260.15" y="719" font-size="11.13" textLength="23.12" lengthAdjust="spacingAndGlyphs">DAD</text>
<text x="656.99" y="703" font-size="11.13" textLength="16.71" lengthAdjust="spacingAndGlyphs">ERI</text>
<text x="1096.18" y="703" font-size="11.13" textLength="20.26" lengthAdjust="spacingAndGlyphs">SLD</text>
<text x="1198.39" y="703" font-size="11.13" textLength="22" lengthAdjust="spacingAndGlyphs">ORS</text>
<text x="1285.37" y="703" font-size="11.13" textLength="23.59" lengthAdjust="spacingAndGlyphs">GEM</text>
<text x="1108.35" y="687" font-size="11.13" textLength="23.29" lengthAdjust="spacingAndGlyphs">KUM</text>
</g>
<g font-family="'Liberation Sans', sans-serif" fill="#fff" fill-opacity="0.33">
<text transform="translate(148.95 692.45) rotate(-90)" font-size="28.93" textLength="53.56" lengthAdjust="spacingAndGlyphs">APR</text>
<text transform="translate(293.95 699.41) rotate(-90)" font-size="28.93" textLength="58.46" lengthAdjust="spacingAndGlyphs">MAY</text>
<text transform="translate(434.7 684.57) rotate(-90)" font-size="28.93" textLength="46.21" lengthAdjust="spacingAndGlyphs">JUN</text>
<text transform="translate(574.7 680.07) rotate(-90)" font-size="28.93" textLength="41.8" lengthAdjust="spacingAndGlyphs">JUL</text>
<text transform="translate(721.7 697.75) rotate(-90)" font-size="28.93" textLength="58.21" lengthAdjust="spacingAndGlyphs">AUG</text>
<text transform="translate(869.7 690.34) rotate(-90)" font-size="28.93" textLength="50.11" lengthAdjust="spacingAndGlyphs">SEP</text>
<text transform="translate(1014.2 696.47) rotate(-90)" font-size="28.93" textLength="56.79" lengthAdjust="spacingAndGlyphs">OCT</text>
<text transform="translate(1167.2 701.47) rotate(-90)" font-size="28.93" textLength="60.04" lengthAdjust="spacingAndGlyphs">NOV</text>
<text transform="translate(1316.2 698.14) rotate(-90)" font-size="28.93" textLength="56.36" lengthAdjust="spacingAndGlyphs">DEC</text>
<text transform="translate(1465.95 685.6) rotate(-90)" font-size="28.93" textLength="47.86" lengthAdjust="spacingAndGlyphs">JAN</text>
<text transform="translate(1624.7 691.83) rotate(-90)" font-size="28.93" textLength="50.39" lengthAdjust="spacingAndGlyphs">FEB</text>
<text transform="translate(1761.7 702.47) rotate(-90)" font-size="28.93" textLength="61.45" lengthAdjust="spacingAndGlyphs">MAR</text>
</g>
<rect x="19.5" y="637.5" width="1763" height="205" fill="none" stroke="#fff" stroke-width="1.1" shape-rendering="crispEdges"/>
<g stroke="#fff" stroke-width="1.1" shape-rendering="crispEdges">
<line x1="19.5" y1="842.5" x2="19.5" y2="848"/>
<line x1="264.5" y1="842.5" x2="264.5" y2="848"/>
<line x1="509.5" y1="842.5" x2="509.5" y2="848"/>
<line x1="754.5" y1="842.5" x2="754.5" y2="848"/>
<line x1="998.5" y1="842.5" x2="998.5" y2="848"/>
<line x1="1243.5" y1="842.5" x2="1243.5" y2="848"/>
<line x1="1488.5" y1="842.5" x2="1488.5" y2="848"/>
<line x1="1733.5" y1="842.5" x2="1733.5" y2="848"/>
</g>
<g font-family="'Liberation Sans', sans-serif" fill="#fff">
<text x="15.4" y="861.8" font-size="14.09" textLength="7.8" lengthAdjust="spacingAndGlyphs">0</text>
<text x="256.07" y="861.8" font-size="14.09" textLength="16.16" lengthAdjust="spacingAndGlyphs">50</text>
<text x="496.37" y="861.8" font-size="14.09" textLength="24.75" lengthAdjust="spacingAndGlyphs">100</text>
<text x="741.23" y="861.8" font-size="14.09" textLength="24.75" lengthAdjust="spacingAndGlyphs">150</text>
<text x="986.23" y="861.8" font-size="14.09" textLength="24.86" lengthAdjust="spacingAndGlyphs">200</text>
<text x="1231.09" y="861.8" font-size="14.09" textLength="24.86" lengthAdjust="spacingAndGlyphs">250</text>
<text x="1476.16" y="861.8" font-size="14.09" textLength="24.63" lengthAdjust="spacingAndGlyphs">300</text>
<text x="1721.02" y="861.8" font-size="14.09" textLength="24.63" lengthAdjust="spacingAndGlyphs">350</text>
<text x="826.78" y="881.9" font-size="14.83" textLength="147.2" lengthAdjust="spacingAndGlyphs">Solar longitude (deg)</text>
</g>
</svg></body></html>
